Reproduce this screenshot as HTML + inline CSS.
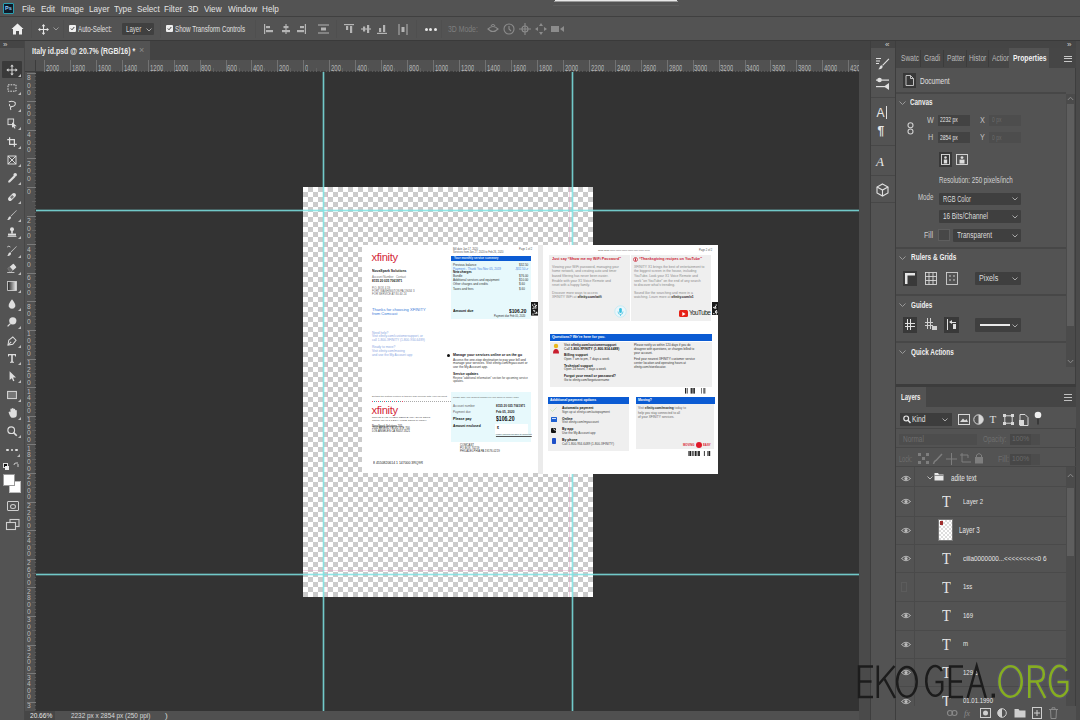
<!DOCTYPE html>
<html><head><meta charset="utf-8"><style>*{margin:0;padding:0;box-sizing:border-box}
html,body{width:1080px;height:720px;overflow:hidden;background:#535353;font-family:"Liberation Sans",sans-serif}
.a{position:absolute}
.t{position:absolute;white-space:nowrap;transform-origin:0 0}
svg.a{overflow:visible}
</style></head><body>
<div id="root" style="position:absolute;left:0;top:0;width:1080px;height:720px;overflow:hidden">
<div class="a" style="left:0px;top:0px;width:1080px;height:16px;background:#535353"></div>
<div class="a" style="left:0px;top:16px;width:1080px;height:1px;background:#404040"></div>
<div class="a" style="left:0px;top:17px;width:1080px;height:23px;background:#535353"></div>
<div class="a" style="left:0px;top:40px;width:1080px;height:1px;background:#3a3a3a"></div>
<div class="a" style="left:555px;top:0px;width:122px;height:1px;background:#e8e8e8"></div>
<div class="a" style="left:554px;top:1px;width:124px;height:1px;background:#9a9a9a"></div>
<div class="a" style="left:553px;top:5px;width:126px;height:1px;background:#5c5c5c"></div>
<div class="a" style="left:3px;top:3px;width:11px;height:11px;background:#0d1b2a;border:1px solid #2b9fb0;border-radius:1px"></div>
<div class="t" style="left:5px;top:5.75px;font-size:5.5px;line-height:5.5px;color:#8fd0ff;font-weight:bold;">Ps</div>
<div class="t" style="left:22px;top:3.85px;font-size:9.5px;line-height:9.5px;color:#e4e4e4;transform:scaleX(0.86);">File</div>
<div class="t" style="left:41px;top:3.85px;font-size:9.5px;line-height:9.5px;color:#e4e4e4;transform:scaleX(0.86);">Edit</div>
<div class="t" style="left:61px;top:3.85px;font-size:9.5px;line-height:9.5px;color:#e4e4e4;transform:scaleX(0.86);">Image</div>
<div class="t" style="left:89px;top:3.85px;font-size:9.5px;line-height:9.5px;color:#e4e4e4;transform:scaleX(0.86);">Layer</div>
<div class="t" style="left:114px;top:3.85px;font-size:9.5px;line-height:9.5px;color:#e4e4e4;transform:scaleX(0.86);">Type</div>
<div class="t" style="left:137px;top:3.85px;font-size:9.5px;line-height:9.5px;color:#e4e4e4;transform:scaleX(0.86);">Select</div>
<div class="t" style="left:164px;top:3.85px;font-size:9.5px;line-height:9.5px;color:#e4e4e4;transform:scaleX(0.86);">Filter</div>
<div class="t" style="left:188px;top:3.85px;font-size:9.5px;line-height:9.5px;color:#e4e4e4;transform:scaleX(0.86);">3D</div>
<div class="t" style="left:204px;top:3.85px;font-size:9.5px;line-height:9.5px;color:#e4e4e4;transform:scaleX(0.86);">View</div>
<div class="t" style="left:228px;top:3.85px;font-size:9.5px;line-height:9.5px;color:#e4e4e4;transform:scaleX(0.86);">Window</div>
<div class="t" style="left:262px;top:3.85px;font-size:9.5px;line-height:9.5px;color:#e4e4e4;transform:scaleX(0.86);">Help</div>
<svg class="a" style="left:11px;top:23px;" width="13" height="12" viewBox="0 0 13 12"><path d="M6.5 0.5 L12.5 6 L11 6 L11 11.5 L8 11.5 L8 8 L5 8 L5 11.5 L2 11.5 L2 6 L0.5 6 Z" fill="#eeeeee"/></svg>
<svg class="a" style="left:38px;top:23.5px;" width="11" height="11" viewBox="0 0 11 11"><g fill="none" stroke="#e6e6e6" stroke-width="1.1"><path d="M5.5 1 V10 M1 5.5 H10"/></g><g fill="#e6e6e6"><path d="M5.5 0 L7.3 2.2 H3.7Z M5.5 11 L7.3 8.8 H3.7Z M0 5.5 L2.2 3.7 V7.3Z M11 5.5 L8.8 3.7 V7.3Z"/></g></svg>
<svg class="a" style="left:53px;top:27px;" width="6" height="4" viewBox="0 0 6 4"><path d="M0.5 0.5 L3 3 L5.5 0.5" stroke="#9a9a9a" fill="none" stroke-width="1"/></svg>
<div class="a" style="left:31px;top:20px;width:1px;height:18px;background:#4f4f4f"></div>
<div class="a" style="left:63px;top:20px;width:1px;height:18px;background:#4f4f4f"></div>
<div class="a" style="left:69px;top:25px;width:7px;height:7px;background:#eeeeee;border-radius:1px"></div>
<svg class="a" style="left:70px;top:26px;" width="5" height="5" viewBox="0 0 5 5"><path d="M0.8 2.5 L2 3.8 L4.3 1" stroke="#444" fill="none" stroke-width="1"/></svg>
<div class="t" style="left:78px;top:24.50px;font-size:9px;line-height:9px;color:#e0e0e0;transform:scaleX(0.69);">Auto-Select:</div>
<div class="a" style="left:122px;top:23px;width:32px;height:12px;background:#404040;border-radius:1px"></div>
<div class="t" style="left:126px;top:24.95px;font-size:8.5px;line-height:8.5px;color:#dcdcdc;transform:scaleX(0.72);">Layer</div>
<svg class="a" style="left:146px;top:28px;" width="6" height="4" viewBox="0 0 6 4"><path d="M0.5 0.5 L3 3 L5.5 0.5" stroke="#aaa" fill="none" stroke-width="1"/></svg>
<div class="a" style="left:160px;top:20px;width:1px;height:18px;background:#4f4f4f"></div>
<div class="a" style="left:166px;top:25px;width:7px;height:7px;background:#eeeeee;border-radius:1px"></div>
<svg class="a" style="left:167px;top:26px;" width="5" height="5" viewBox="0 0 5 5"><path d="M0.8 2.5 L2 3.8 L4.3 1" stroke="#444" fill="none" stroke-width="1"/></svg>
<div class="t" style="left:175px;top:24.50px;font-size:9px;line-height:9px;color:#e0e0e0;transform:scaleX(0.69);">Show Transform Controls</div>
<div class="a" style="left:255px;top:20px;width:1px;height:18px;background:#4f4f4f"></div>
<div class="a" style="left:336px;top:20px;width:1px;height:18px;background:#4f4f4f"></div>
<div class="a" style="left:416px;top:20px;width:1px;height:18px;background:#4f4f4f"></div>
<div class="a" style="left:441px;top:20px;width:1px;height:18px;background:#4f4f4f"></div>
<svg class="a" style="left:264px;top:24px;" width="11" height="11" viewBox="0 0 11 11"><rect x="0" y="0" width="1.2" height="10" fill="#b4b4b4"/><rect x="2" y="2" width="4" height="2.2" fill="#b4b4b4"/><rect x="2" y="6" width="7" height="2.2" fill="#b4b4b4"/></svg>
<svg class="a" style="left:281px;top:24px;" width="11" height="11" viewBox="0 0 11 11"><rect x="4.4" y="0" width="1.2" height="10" fill="#b4b4b4"/><rect x="2.5" y="2" width="5" height="2.2" fill="#b4b4b4"/><rect x="1" y="6" width="8" height="2.2" fill="#b4b4b4"/></svg>
<svg class="a" style="left:296px;top:24px;" width="11" height="11" viewBox="0 0 11 11"><rect x="8.8" y="0" width="1.2" height="10" fill="#b4b4b4"/><rect x="4" y="2" width="4" height="2.2" fill="#b4b4b4"/><rect x="1" y="6" width="7" height="2.2" fill="#b4b4b4"/></svg>
<svg class="a" style="left:317.5px;top:24px;" width="11" height="11" viewBox="0 0 11 11"><rect x="0" y="0.5" width="11" height="1" fill="#b4b4b4"/><rect x="3" y="3.5" width="5" height="3" fill="#b4b4b4"/><rect x="0" y="8.5" width="11" height="1" fill="#b4b4b4"/></svg>
<svg class="a" style="left:344px;top:24px;" width="11" height="11" viewBox="0 0 11 11"><rect x="0" y="0" width="10" height="1.2" fill="#b4b4b4"/><rect x="2" y="2" width="2.2" height="4" fill="#b4b4b4"/><rect x="6" y="2" width="2.2" height="7" fill="#b4b4b4"/></svg>
<svg class="a" style="left:361px;top:24px;" width="11" height="11" viewBox="0 0 11 11"><rect x="0" y="4.4" width="10" height="1.2" fill="#b4b4b4"/><rect x="2" y="2.5" width="2.2" height="5" fill="#b4b4b4"/><rect x="6" y="1" width="2.2" height="8" fill="#b4b4b4"/></svg>
<svg class="a" style="left:377px;top:24px;" width="11" height="11" viewBox="0 0 11 11"><rect x="0" y="8.8" width="10" height="1.2" fill="#b4b4b4"/><rect x="2" y="4" width="2.2" height="4" fill="#b4b4b4"/><rect x="6" y="1" width="2.2" height="7" fill="#b4b4b4"/></svg>
<svg class="a" style="left:398px;top:24px;" width="11" height="11" viewBox="0 0 11 11"><rect x="0.5" y="0" width="1" height="11" fill="#b4b4b4"/><rect x="3.5" y="3" width="3" height="5" fill="#b4b4b4"/><rect x="8.5" y="0" width="1" height="11" fill="#b4b4b4"/></svg>
<div class="a" style="left:424.5px;top:27.6px;width:3px;height:3px;background:#e8e8e8;border-radius:50%"></div>
<div class="a" style="left:429.0px;top:27.6px;width:3px;height:3px;background:#e8e8e8;border-radius:50%"></div>
<div class="a" style="left:433.5px;top:27.6px;width:3px;height:3px;background:#e8e8e8;border-radius:50%"></div>
<div class="t" style="left:448px;top:24.75px;font-size:8.5px;line-height:8.5px;color:#7e7e7e;transform:scaleX(0.81);">3D Mode:</div>
<svg class="a" style="left:486px;top:23px;" width="14" height="12" viewBox="0 0 14 12"><g fill="none" stroke="#8c8c8c" stroke-width="1.1"><path d="M2 6 Q7 1 12 6 Q7 11 2 6Z"/><path d="M5 3 Q7 0 9 3"/></g></svg>
<svg class="a" style="left:503px;top:23px;" width="12" height="12" viewBox="0 0 12 12"><g fill="none" stroke="#8c8c8c" stroke-width="1.1"><circle cx="6" cy="6" r="5"/><path d="M6 3 V6 L8 8"/></g></svg>
<svg class="a" style="left:519px;top:23px;" width="12" height="12" viewBox="0 0 12 12"><g fill="none" stroke="#8c8c8c" stroke-width="1.1"><path d="M6 0 V12 M0 6 H12"/><circle cx="6" cy="6" r="3"/></g></svg>
<svg class="a" style="left:535px;top:23px;" width="12" height="12" viewBox="0 0 12 12"><g fill="#8c8c8c"><path d="M6 0 L8 3 H4Z M6 12 L8 9 H4Z M0 6 L3 4 V8Z M12 6 L9 4 V8Z"/></g></svg>
<svg class="a" style="left:551px;top:24px;" width="14" height="10" viewBox="0 0 14 10"><g fill="#8c8c8c"><rect x="0" y="2" width="8" height="6"/><path d="M9 5 L13 2 V8Z"/></g></svg>
<div class="a" style="left:0px;top:41px;width:25px;height:679px;background:#535353"></div>
<div class="a" style="left:24px;top:41px;width:1px;height:679px;background:#474747"></div>
<div class="a" style="left:0px;top:41px;width:24px;height:7px;background:#454545"></div>
<div class="t" style="left:3px;top:40.50px;font-size:8px;line-height:8px;color:#cfcfcf;">&#187;</div>
<div class="a" style="left:2px;top:61px;width:20px;height:17px;background:#3a3a3a;border-radius:1px"></div>
<svg class="a" style="left:5.0px;top:63.0px;transform:scale(0.8);transform-origin:50% 50%" width="14" height="14" viewBox="0 0 14 14"><g fill="#dedede"><rect x="6.4" y="2" width="1.2" height="10"/><rect x="2" y="6.4" width="10" height="1.2"/><path d="M7 0 L9.2 2.6 H4.8Z M7 14 L9.2 11.4 H4.8Z M0 7 L2.6 4.8 V9.2Z M14 7 L11.4 4.8 V9.2Z"/></g></svg>
<svg class="a" style="left:18px;top:74px;" width="3" height="3" viewBox="0 0 3 3"><path d="M3 0 V3 H0Z" fill="#bdbdbd"/></svg>
<svg class="a" style="left:5.0px;top:81.0px;transform:scale(0.8);transform-origin:50% 50%" width="14" height="14" viewBox="0 0 14 14"><rect x="2" y="3" width="10" height="8" fill="none" stroke="#dedede" stroke-width="1.2" stroke-dasharray="2 1.3"/></svg>
<svg class="a" style="left:18px;top:92px;" width="3" height="3" viewBox="0 0 3 3"><path d="M3 0 V3 H0Z" fill="#bdbdbd"/></svg>
<svg class="a" style="left:5.0px;top:98.0px;transform:scale(0.8);transform-origin:50% 50%" width="14" height="14" viewBox="0 0 14 14"><g fill="none" stroke="#dedede" stroke-width="1.3"><path d="M3 3 Q8 1 11 4 Q12 8 7 9 Q3 9 4 6 M6 9 Q4 12 6 13"/></g></svg>
<svg class="a" style="left:18px;top:109px;" width="3" height="3" viewBox="0 0 3 3"><path d="M3 0 V3 H0Z" fill="#bdbdbd"/></svg>
<svg class="a" style="left:5.0px;top:116.0px;transform:scale(0.8);transform-origin:50% 50%" width="14" height="14" viewBox="0 0 14 14"><g fill="#dedede"><rect x="2" y="2" width="7" height="7" fill="none" stroke="#dedede" stroke-width="1.2"/><path d="M7 6 L13 11 L10 11 L11.5 13.5 L10 14 L8.5 11.8 L7 13Z"/></g></svg>
<svg class="a" style="left:18px;top:127px;" width="3" height="3" viewBox="0 0 3 3"><path d="M3 0 V3 H0Z" fill="#bdbdbd"/></svg>
<svg class="a" style="left:5.0px;top:134.5px;transform:scale(0.8);transform-origin:50% 50%" width="14" height="14" viewBox="0 0 14 14"><g fill="none" stroke="#dedede" stroke-width="1.5"><path d="M4 1 V10 H13 M1 4 H10 V13"/></g></svg>
<svg class="a" style="left:18px;top:145.5px;" width="3" height="3" viewBox="0 0 3 3"><path d="M3 0 V3 H0Z" fill="#bdbdbd"/></svg>
<svg class="a" style="left:5.0px;top:153.0px;transform:scale(0.8);transform-origin:50% 50%" width="14" height="14" viewBox="0 0 14 14"><g fill="none" stroke="#dedede" stroke-width="1.2"><rect x="2" y="2" width="10" height="10"/><path d="M2 2 L12 12 M12 2 L2 12"/></g></svg>
<svg class="a" style="left:18px;top:164px;" width="3" height="3" viewBox="0 0 3 3"><path d="M3 0 V3 H0Z" fill="#bdbdbd"/></svg>
<svg class="a" style="left:5.0px;top:171.0px;transform:scale(0.8);transform-origin:50% 50%" width="14" height="14" viewBox="0 0 14 14"><g fill="none" stroke="#dedede" stroke-width="1.4"><path d="M10 4 L3 11 L3 12 L4 12 L11 5"/></g><circle cx="11" cy="3" r="2.2" fill="#dedede"/></svg>
<svg class="a" style="left:18px;top:182px;" width="3" height="3" viewBox="0 0 3 3"><path d="M3 0 V3 H0Z" fill="#bdbdbd"/></svg>
<svg class="a" style="left:5.0px;top:189.5px;transform:scale(0.8);transform-origin:50% 50%" width="14" height="14" viewBox="0 0 14 14"><g transform="rotate(-45 7 7)"><rect x="1" y="4.5" width="12" height="5" rx="2.5" fill="#dedede"/><rect x="5" y="5.5" width="4" height="3" fill="#777"/></g></svg>
<svg class="a" style="left:18px;top:200.5px;" width="3" height="3" viewBox="0 0 3 3"><path d="M3 0 V3 H0Z" fill="#bdbdbd"/></svg>
<svg class="a" style="left:5.0px;top:207.5px;transform:scale(0.8);transform-origin:50% 50%" width="14" height="14" viewBox="0 0 14 14"><g fill="#dedede"><path d="M12.5 1 L13 1.5 L6 8.5 L5.5 8Z"/><path d="M5 8.5 Q6.5 10 5 12 Q3 13.5 1 13 Q2.5 12 2.5 10.5 Q3 8.5 5 8.5Z"/></g></svg>
<svg class="a" style="left:18px;top:218.5px;" width="3" height="3" viewBox="0 0 3 3"><path d="M3 0 V3 H0Z" fill="#bdbdbd"/></svg>
<svg class="a" style="left:5.0px;top:225.0px;transform:scale(0.8);transform-origin:50% 50%" width="14" height="14" viewBox="0 0 14 14"><g fill="#dedede"><circle cx="7" cy="3.5" r="2.5"/><rect x="6" y="5" width="2" height="4"/><rect x="2" y="9" width="10" height="2.5"/><rect x="1.5" y="12" width="11" height="1"/></g></svg>
<svg class="a" style="left:18px;top:236px;" width="3" height="3" viewBox="0 0 3 3"><path d="M3 0 V3 H0Z" fill="#bdbdbd"/></svg>
<svg class="a" style="left:5.0px;top:243.5px;transform:scale(0.8);transform-origin:50% 50%" width="14" height="14" viewBox="0 0 14 14"><g fill="#dedede"><path d="M12.5 1 L13 1.5 L6 8.5 L5.5 8Z"/><path d="M5 8.5 Q6.5 10 5 12 Q3 13.5 1 13 Q2.5 12 2.5 10.5 Q3 8.5 5 8.5Z"/></g><path d="M1 2 Q3 0 5 2" stroke="#dedede" fill="none"/></svg>
<svg class="a" style="left:18px;top:254.5px;" width="3" height="3" viewBox="0 0 3 3"><path d="M3 0 V3 H0Z" fill="#bdbdbd"/></svg>
<svg class="a" style="left:5.0px;top:261.0px;transform:scale(0.8);transform-origin:50% 50%" width="14" height="14" viewBox="0 0 14 14"><g transform="rotate(-40 7 7)"><rect x="2" y="4" width="10" height="6" rx="1" fill="#dedede"/><rect x="2" y="4" width="4" height="6" fill="#666"/></g><rect x="1" y="12" width="9" height="1" fill="#dedede"/></svg>
<svg class="a" style="left:18px;top:272px;" width="3" height="3" viewBox="0 0 3 3"><path d="M3 0 V3 H0Z" fill="#bdbdbd"/></svg>
<svg class="a" style="left:5.0px;top:279.0px;transform:scale(0.8);transform-origin:50% 50%" width="14" height="14" viewBox="0 0 14 14"><defs><linearGradient id="gr" x1="0" x2="1"><stop offset="0" stop-color="#222"/><stop offset="1" stop-color="#eee"/></linearGradient></defs><rect x="1.5" y="1.5" width="11" height="11" fill="url(#gr)" stroke="#ddd" stroke-width="1"/></svg>
<svg class="a" style="left:18px;top:290px;" width="3" height="3" viewBox="0 0 3 3"><path d="M3 0 V3 H0Z" fill="#bdbdbd"/></svg>
<svg class="a" style="left:5.0px;top:297.0px;transform:scale(0.8);transform-origin:50% 50%" width="14" height="14" viewBox="0 0 14 14"><path d="M7 1 Q12 7 11 10 Q10 13 7 13 Q4 13 3 10 Q2 7 7 1Z" fill="#dedede"/></svg>
<svg class="a" style="left:18px;top:308px;" width="3" height="3" viewBox="0 0 3 3"><path d="M3 0 V3 H0Z" fill="#bdbdbd"/></svg>
<svg class="a" style="left:5.0px;top:315.0px;transform:scale(0.8);transform-origin:50% 50%" width="14" height="14" viewBox="0 0 14 14"><circle cx="8" cy="5.5" r="4.5" fill="#dedede"/><path d="M5 9 L1.5 12.5" stroke="#dedede" stroke-width="1.6"/></svg>
<svg class="a" style="left:18px;top:326px;" width="3" height="3" viewBox="0 0 3 3"><path d="M3 0 V3 H0Z" fill="#bdbdbd"/></svg>
<svg class="a" style="left:5.0px;top:333.5px;transform:scale(0.8);transform-origin:50% 50%" width="14" height="14" viewBox="0 0 14 14"><g fill="none" stroke="#dedede" stroke-width="1.3"><path d="M2 12 L3 6 L8 2 L12 6 L8 11Z"/><path d="M2 12 L6 8"/></g></svg>
<svg class="a" style="left:18px;top:344.5px;" width="3" height="3" viewBox="0 0 3 3"><path d="M3 0 V3 H0Z" fill="#bdbdbd"/></svg>
<svg class="a" style="left:5.0px;top:351.0px;transform:scale(0.8);transform-origin:50% 50%" width="14" height="14" viewBox="0 0 14 14"><path d="M2 2 H12 V5 H11 L10.5 3.5 H8 V11.5 L9.5 12 V13 H4.5 V12 L6 11.5 V3.5 H3.5 L3 5 H2Z" fill="#dedede"/></svg>
<svg class="a" style="left:18px;top:362px;" width="3" height="3" viewBox="0 0 3 3"><path d="M3 0 V3 H0Z" fill="#bdbdbd"/></svg>
<svg class="a" style="left:5.0px;top:369.0px;transform:scale(0.8);transform-origin:50% 50%" width="14" height="14" viewBox="0 0 14 14"><path d="M4 1 L12 9 L8.3 9 L10 13 L8.5 13.6 L6.8 9.7 L4 12Z" fill="#dedede"/></svg>
<svg class="a" style="left:18px;top:380px;" width="3" height="3" viewBox="0 0 3 3"><path d="M3 0 V3 H0Z" fill="#bdbdbd"/></svg>
<svg class="a" style="left:5.0px;top:387.5px;transform:scale(0.8);transform-origin:50% 50%" width="14" height="14" viewBox="0 0 14 14"><rect x="1.5" y="2.5" width="11" height="9" fill="#777" stroke="#dedede" stroke-width="1.2"/></svg>
<svg class="a" style="left:18px;top:398.5px;" width="3" height="3" viewBox="0 0 3 3"><path d="M3 0 V3 H0Z" fill="#bdbdbd"/></svg>
<svg class="a" style="left:5.0px;top:406.0px;transform:scale(0.8);transform-origin:50% 50%" width="14" height="14" viewBox="0 0 14 14"><path d="M3 7 Q2 5 4 5 L5 6 V2.5 Q5 1.5 6 1.5 Q7 1.5 7 2.5 V1.8 Q7 0.8 8 0.8 Q9 0.8 9 1.8 V2.5 Q9 1.6 10 1.6 Q11 1.6 11 2.6 V4 Q11 3.2 12 3.2 Q13 3.2 13 4.2 V9 Q13 13 9 13 H7 Q5 13 3 7Z" fill="#dedede"/></svg>
<svg class="a" style="left:18px;top:417px;" width="3" height="3" viewBox="0 0 3 3"><path d="M3 0 V3 H0Z" fill="#bdbdbd"/></svg>
<svg class="a" style="left:5.0px;top:424.0px;transform:scale(0.8);transform-origin:50% 50%" width="14" height="14" viewBox="0 0 14 14"><g fill="none" stroke="#dedede" stroke-width="1.4"><circle cx="6" cy="6" r="4.2"/><path d="M9 9 L13 13" stroke-width="2"/></g></svg>
<svg class="a" style="left:18px;top:435px;" width="3" height="3" viewBox="0 0 3 3"><path d="M3 0 V3 H0Z" fill="#bdbdbd"/></svg>
<div class="a" style="left:6.3px;top:448.8px;width:2.4px;height:2.4px;background:#e0e0e0;border-radius:50%"></div>
<div class="a" style="left:10.8px;top:448.8px;width:2.4px;height:2.4px;background:#e0e0e0;border-radius:50%"></div>
<div class="a" style="left:15.3px;top:448.8px;width:2.4px;height:2.4px;background:#e0e0e0;border-radius:50%"></div>
<svg class="a" style="left:17px;top:454px;" width="3" height="3" viewBox="0 0 3 3"><path d="M3 0 V3 H0Z" fill="#bdbdbd"/></svg>
<div class="a" style="left:3px;top:463px;width:5px;height:5px;background:#111;border:1px solid #ddd"></div>
<div class="a" style="left:5px;top:466px;width:4px;height:4px;background:#eee"></div>
<svg class="a" style="left:13px;top:462px;" width="7" height="7" viewBox="0 0 7 7"><path d="M1 3 Q1 1 3 1 L5 1" stroke="#ccc" fill="none"/><path d="M5 2 V5" stroke="#ccc"/></svg>
<div class="a" style="left:9px;top:481px;width:12px;height:12px;background:#ffffff;border:1px solid #bbb"></div>
<div class="a" style="left:3px;top:474px;width:12px;height:12px;background:#ffffff;border:1px solid #999"></div>
<div class="a" style="left:7px;top:501px;width:12px;height:10px;border:1.2px solid #cfcfcf;border-radius:1px"></div>
<div class="a" style="left:10px;top:503.5px;width:6px;height:5px;border:1px solid #cfcfcf;border-radius:50%"></div>
<svg class="a" style="left:6px;top:519px;" width="14" height="12" viewBox="0 0 14 12"><g fill="none" stroke="#cfcfcf" stroke-width="1.1"><rect x="4" y="0.5" width="9" height="7"/><rect x="0.5" y="3.5" width="9" height="7" fill="#535353"/></g></svg>
<div class="a" style="left:25px;top:41px;width:845px;height:19px;background:#434343"></div>
<div class="a" style="left:25px;top:41px;width:125px;height:19px;background:#535353"></div>
<div class="t" style="left:32px;top:45.75px;font-size:9.5px;line-height:9.5px;color:#ececec;transform:scaleX(0.733);font-weight:bold;">Italy id.psd @ 20.7% (RGB/16) *</div>
<div class="t" style="left:139px;top:46.00px;font-size:9px;line-height:9px;color:#8c8c8c;">&#215;</div>
<div class="a" style="left:25px;top:60px;width:834px;height:12px;background:#515151"></div>
<div class="a" style="left:25px;top:72px;width:11px;height:639px;background:#515151"></div>
<div class="a" style="left:25px;top:71px;width:834px;height:1px;background:#3c3c3c"></div>
<div class="a" style="left:35px;top:60px;width:1px;height:651px;background:#3c3c3c"></div>
<div class="a" style="left:44px;top:60px;width:1px;height:12px;background:#727272"></div>
<div class="a" style="left:47px;top:70px;width:1px;height:2px;background:#575757"></div>
<div class="a" style="left:50px;top:70px;width:1px;height:2px;background:#575757"></div>
<div class="a" style="left:54px;top:70px;width:1px;height:2px;background:#575757"></div>
<div class="a" style="left:57px;top:68px;width:1px;height:4px;background:#606060"></div>
<div class="a" style="left:60px;top:70px;width:1px;height:2px;background:#575757"></div>
<div class="a" style="left:63px;top:70px;width:1px;height:2px;background:#575757"></div>
<div class="a" style="left:67px;top:70px;width:1px;height:2px;background:#575757"></div>
<div class="t" style="left:45.7px;top:63.6px;font-size:9.5px;line-height:9.5px;color:#b4b4b4;transform:scale(0.63,0.86);overflow:hidden;">2000</div>
<div class="a" style="left:70px;top:60px;width:1px;height:12px;background:#727272"></div>
<div class="a" style="left:73px;top:70px;width:1px;height:2px;background:#575757"></div>
<div class="a" style="left:76px;top:70px;width:1px;height:2px;background:#575757"></div>
<div class="a" style="left:80px;top:70px;width:1px;height:2px;background:#575757"></div>
<div class="a" style="left:83px;top:68px;width:1px;height:4px;background:#606060"></div>
<div class="a" style="left:86px;top:70px;width:1px;height:2px;background:#575757"></div>
<div class="a" style="left:89px;top:70px;width:1px;height:2px;background:#575757"></div>
<div class="a" style="left:93px;top:70px;width:1px;height:2px;background:#575757"></div>
<div class="t" style="left:71.6px;top:63.6px;font-size:9.5px;line-height:9.5px;color:#b4b4b4;transform:scale(0.63,0.86);overflow:hidden;">1800</div>
<div class="a" style="left:96px;top:60px;width:1px;height:12px;background:#727272"></div>
<div class="a" style="left:99px;top:70px;width:1px;height:2px;background:#575757"></div>
<div class="a" style="left:102px;top:70px;width:1px;height:2px;background:#575757"></div>
<div class="a" style="left:106px;top:70px;width:1px;height:2px;background:#575757"></div>
<div class="a" style="left:109px;top:68px;width:1px;height:4px;background:#606060"></div>
<div class="a" style="left:112px;top:70px;width:1px;height:2px;background:#575757"></div>
<div class="a" style="left:115px;top:70px;width:1px;height:2px;background:#575757"></div>
<div class="a" style="left:119px;top:70px;width:1px;height:2px;background:#575757"></div>
<div class="t" style="left:97.6px;top:63.6px;font-size:9.5px;line-height:9.5px;color:#b4b4b4;transform:scale(0.63,0.86);overflow:hidden;">1600</div>
<div class="a" style="left:122px;top:60px;width:1px;height:12px;background:#727272"></div>
<div class="a" style="left:125px;top:70px;width:1px;height:2px;background:#575757"></div>
<div class="a" style="left:128px;top:70px;width:1px;height:2px;background:#575757"></div>
<div class="a" style="left:131px;top:70px;width:1px;height:2px;background:#575757"></div>
<div class="a" style="left:135px;top:68px;width:1px;height:4px;background:#606060"></div>
<div class="a" style="left:138px;top:70px;width:1px;height:2px;background:#575757"></div>
<div class="a" style="left:141px;top:70px;width:1px;height:2px;background:#575757"></div>
<div class="a" style="left:144px;top:70px;width:1px;height:2px;background:#575757"></div>
<div class="t" style="left:123.5px;top:63.6px;font-size:9.5px;line-height:9.5px;color:#b4b4b4;transform:scale(0.63,0.86);overflow:hidden;">1400</div>
<div class="a" style="left:148px;top:60px;width:1px;height:12px;background:#727272"></div>
<div class="a" style="left:151px;top:70px;width:1px;height:2px;background:#575757"></div>
<div class="a" style="left:154px;top:70px;width:1px;height:2px;background:#575757"></div>
<div class="a" style="left:157px;top:70px;width:1px;height:2px;background:#575757"></div>
<div class="a" style="left:161px;top:68px;width:1px;height:4px;background:#606060"></div>
<div class="a" style="left:164px;top:70px;width:1px;height:2px;background:#575757"></div>
<div class="a" style="left:167px;top:70px;width:1px;height:2px;background:#575757"></div>
<div class="a" style="left:170px;top:70px;width:1px;height:2px;background:#575757"></div>
<div class="t" style="left:149.5px;top:63.6px;font-size:9.5px;line-height:9.5px;color:#b4b4b4;transform:scale(0.63,0.86);overflow:hidden;">1200</div>
<div class="a" style="left:174px;top:60px;width:1px;height:12px;background:#727272"></div>
<div class="a" style="left:177px;top:70px;width:1px;height:2px;background:#575757"></div>
<div class="a" style="left:180px;top:70px;width:1px;height:2px;background:#575757"></div>
<div class="a" style="left:183px;top:70px;width:1px;height:2px;background:#575757"></div>
<div class="a" style="left:187px;top:68px;width:1px;height:4px;background:#606060"></div>
<div class="a" style="left:190px;top:70px;width:1px;height:2px;background:#575757"></div>
<div class="a" style="left:193px;top:70px;width:1px;height:2px;background:#575757"></div>
<div class="a" style="left:196px;top:70px;width:1px;height:2px;background:#575757"></div>
<div class="t" style="left:175.4px;top:63.6px;font-size:9.5px;line-height:9.5px;color:#b4b4b4;transform:scale(0.63,0.86);overflow:hidden;">1000</div>
<div class="a" style="left:200px;top:60px;width:1px;height:12px;background:#727272"></div>
<div class="a" style="left:203px;top:70px;width:1px;height:2px;background:#575757"></div>
<div class="a" style="left:206px;top:70px;width:1px;height:2px;background:#575757"></div>
<div class="a" style="left:209px;top:70px;width:1px;height:2px;background:#575757"></div>
<div class="a" style="left:213px;top:68px;width:1px;height:4px;background:#606060"></div>
<div class="a" style="left:216px;top:70px;width:1px;height:2px;background:#575757"></div>
<div class="a" style="left:219px;top:70px;width:1px;height:2px;background:#575757"></div>
<div class="a" style="left:222px;top:70px;width:1px;height:2px;background:#575757"></div>
<div class="t" style="left:201.4px;top:63.6px;font-size:9.5px;line-height:9.5px;color:#b4b4b4;transform:scale(0.63,0.86);overflow:hidden;">800</div>
<div class="a" style="left:226px;top:60px;width:1px;height:12px;background:#727272"></div>
<div class="a" style="left:229px;top:70px;width:1px;height:2px;background:#575757"></div>
<div class="a" style="left:232px;top:70px;width:1px;height:2px;background:#575757"></div>
<div class="a" style="left:235px;top:70px;width:1px;height:2px;background:#575757"></div>
<div class="a" style="left:239px;top:68px;width:1px;height:4px;background:#606060"></div>
<div class="a" style="left:242px;top:70px;width:1px;height:2px;background:#575757"></div>
<div class="a" style="left:245px;top:70px;width:1px;height:2px;background:#575757"></div>
<div class="a" style="left:248px;top:70px;width:1px;height:2px;background:#575757"></div>
<div class="t" style="left:227.3px;top:63.6px;font-size:9.5px;line-height:9.5px;color:#b4b4b4;transform:scale(0.63,0.86);overflow:hidden;">600</div>
<div class="a" style="left:251px;top:60px;width:1px;height:12px;background:#727272"></div>
<div class="a" style="left:255px;top:70px;width:1px;height:2px;background:#575757"></div>
<div class="a" style="left:258px;top:70px;width:1px;height:2px;background:#575757"></div>
<div class="a" style="left:261px;top:70px;width:1px;height:2px;background:#575757"></div>
<div class="a" style="left:264px;top:68px;width:1px;height:4px;background:#606060"></div>
<div class="a" style="left:268px;top:70px;width:1px;height:2px;background:#575757"></div>
<div class="a" style="left:271px;top:70px;width:1px;height:2px;background:#575757"></div>
<div class="a" style="left:274px;top:70px;width:1px;height:2px;background:#575757"></div>
<div class="t" style="left:253.3px;top:63.6px;font-size:9.5px;line-height:9.5px;color:#b4b4b4;transform:scale(0.63,0.86);overflow:hidden;">400</div>
<div class="a" style="left:277px;top:60px;width:1px;height:12px;background:#727272"></div>
<div class="a" style="left:281px;top:70px;width:1px;height:2px;background:#575757"></div>
<div class="a" style="left:284px;top:70px;width:1px;height:2px;background:#575757"></div>
<div class="a" style="left:287px;top:70px;width:1px;height:2px;background:#575757"></div>
<div class="a" style="left:290px;top:68px;width:1px;height:4px;background:#606060"></div>
<div class="a" style="left:294px;top:70px;width:1px;height:2px;background:#575757"></div>
<div class="a" style="left:297px;top:70px;width:1px;height:2px;background:#575757"></div>
<div class="a" style="left:300px;top:70px;width:1px;height:2px;background:#575757"></div>
<div class="t" style="left:279.2px;top:63.6px;font-size:9.5px;line-height:9.5px;color:#b4b4b4;transform:scale(0.63,0.86);overflow:hidden;">200</div>
<div class="a" style="left:303px;top:60px;width:1px;height:12px;background:#727272"></div>
<div class="a" style="left:307px;top:70px;width:1px;height:2px;background:#575757"></div>
<div class="a" style="left:310px;top:70px;width:1px;height:2px;background:#575757"></div>
<div class="a" style="left:313px;top:70px;width:1px;height:2px;background:#575757"></div>
<div class="a" style="left:316px;top:68px;width:1px;height:4px;background:#606060"></div>
<div class="a" style="left:320px;top:70px;width:1px;height:2px;background:#575757"></div>
<div class="a" style="left:323px;top:70px;width:1px;height:2px;background:#575757"></div>
<div class="a" style="left:326px;top:70px;width:1px;height:2px;background:#575757"></div>
<div class="t" style="left:305.2px;top:63.6px;font-size:9.5px;line-height:9.5px;color:#b4b4b4;transform:scale(0.63,0.86);overflow:hidden;">0</div>
<div class="a" style="left:329px;top:60px;width:1px;height:12px;background:#727272"></div>
<div class="a" style="left:333px;top:70px;width:1px;height:2px;background:#575757"></div>
<div class="a" style="left:336px;top:70px;width:1px;height:2px;background:#575757"></div>
<div class="a" style="left:339px;top:70px;width:1px;height:2px;background:#575757"></div>
<div class="a" style="left:342px;top:68px;width:1px;height:4px;background:#606060"></div>
<div class="a" style="left:346px;top:70px;width:1px;height:2px;background:#575757"></div>
<div class="a" style="left:349px;top:70px;width:1px;height:2px;background:#575757"></div>
<div class="a" style="left:352px;top:70px;width:1px;height:2px;background:#575757"></div>
<div class="t" style="left:331.1px;top:63.6px;font-size:9.5px;line-height:9.5px;color:#b4b4b4;transform:scale(0.63,0.86);overflow:hidden;">200</div>
<div class="a" style="left:355px;top:60px;width:1px;height:12px;background:#727272"></div>
<div class="a" style="left:359px;top:70px;width:1px;height:2px;background:#575757"></div>
<div class="a" style="left:362px;top:70px;width:1px;height:2px;background:#575757"></div>
<div class="a" style="left:365px;top:70px;width:1px;height:2px;background:#575757"></div>
<div class="a" style="left:368px;top:68px;width:1px;height:4px;background:#606060"></div>
<div class="a" style="left:372px;top:70px;width:1px;height:2px;background:#575757"></div>
<div class="a" style="left:375px;top:70px;width:1px;height:2px;background:#575757"></div>
<div class="a" style="left:378px;top:70px;width:1px;height:2px;background:#575757"></div>
<div class="t" style="left:357.1px;top:63.6px;font-size:9.5px;line-height:9.5px;color:#b4b4b4;transform:scale(0.63,0.86);overflow:hidden;">400</div>
<div class="a" style="left:381px;top:60px;width:1px;height:12px;background:#727272"></div>
<div class="a" style="left:384px;top:70px;width:1px;height:2px;background:#575757"></div>
<div class="a" style="left:388px;top:70px;width:1px;height:2px;background:#575757"></div>
<div class="a" style="left:391px;top:70px;width:1px;height:2px;background:#575757"></div>
<div class="a" style="left:394px;top:68px;width:1px;height:4px;background:#606060"></div>
<div class="a" style="left:397px;top:70px;width:1px;height:2px;background:#575757"></div>
<div class="a" style="left:401px;top:70px;width:1px;height:2px;background:#575757"></div>
<div class="a" style="left:404px;top:70px;width:1px;height:2px;background:#575757"></div>
<div class="t" style="left:383.1px;top:63.6px;font-size:9.5px;line-height:9.5px;color:#b4b4b4;transform:scale(0.63,0.86);overflow:hidden;">600</div>
<div class="a" style="left:407px;top:60px;width:1px;height:12px;background:#727272"></div>
<div class="a" style="left:410px;top:70px;width:1px;height:2px;background:#575757"></div>
<div class="a" style="left:414px;top:70px;width:1px;height:2px;background:#575757"></div>
<div class="a" style="left:417px;top:70px;width:1px;height:2px;background:#575757"></div>
<div class="a" style="left:420px;top:68px;width:1px;height:4px;background:#606060"></div>
<div class="a" style="left:423px;top:70px;width:1px;height:2px;background:#575757"></div>
<div class="a" style="left:427px;top:70px;width:1px;height:2px;background:#575757"></div>
<div class="a" style="left:430px;top:70px;width:1px;height:2px;background:#575757"></div>
<div class="t" style="left:409.0px;top:63.6px;font-size:9.5px;line-height:9.5px;color:#b4b4b4;transform:scale(0.63,0.86);overflow:hidden;">800</div>
<div class="a" style="left:433px;top:60px;width:1px;height:12px;background:#727272"></div>
<div class="a" style="left:436px;top:70px;width:1px;height:2px;background:#575757"></div>
<div class="a" style="left:440px;top:70px;width:1px;height:2px;background:#575757"></div>
<div class="a" style="left:443px;top:70px;width:1px;height:2px;background:#575757"></div>
<div class="a" style="left:446px;top:68px;width:1px;height:4px;background:#606060"></div>
<div class="a" style="left:449px;top:70px;width:1px;height:2px;background:#575757"></div>
<div class="a" style="left:453px;top:70px;width:1px;height:2px;background:#575757"></div>
<div class="a" style="left:456px;top:70px;width:1px;height:2px;background:#575757"></div>
<div class="t" style="left:434.9px;top:63.6px;font-size:9.5px;line-height:9.5px;color:#b4b4b4;transform:scale(0.63,0.86);overflow:hidden;">1000</div>
<div class="a" style="left:459px;top:60px;width:1px;height:12px;background:#727272"></div>
<div class="a" style="left:462px;top:70px;width:1px;height:2px;background:#575757"></div>
<div class="a" style="left:466px;top:70px;width:1px;height:2px;background:#575757"></div>
<div class="a" style="left:469px;top:70px;width:1px;height:2px;background:#575757"></div>
<div class="a" style="left:472px;top:68px;width:1px;height:4px;background:#606060"></div>
<div class="a" style="left:475px;top:70px;width:1px;height:2px;background:#575757"></div>
<div class="a" style="left:479px;top:70px;width:1px;height:2px;background:#575757"></div>
<div class="a" style="left:482px;top:70px;width:1px;height:2px;background:#575757"></div>
<div class="t" style="left:460.9px;top:63.6px;font-size:9.5px;line-height:9.5px;color:#b4b4b4;transform:scale(0.63,0.86);overflow:hidden;">1200</div>
<div class="a" style="left:485px;top:60px;width:1px;height:12px;background:#727272"></div>
<div class="a" style="left:488px;top:70px;width:1px;height:2px;background:#575757"></div>
<div class="a" style="left:492px;top:70px;width:1px;height:2px;background:#575757"></div>
<div class="a" style="left:495px;top:70px;width:1px;height:2px;background:#575757"></div>
<div class="a" style="left:498px;top:68px;width:1px;height:4px;background:#606060"></div>
<div class="a" style="left:501px;top:70px;width:1px;height:2px;background:#575757"></div>
<div class="a" style="left:505px;top:70px;width:1px;height:2px;background:#575757"></div>
<div class="a" style="left:508px;top:70px;width:1px;height:2px;background:#575757"></div>
<div class="t" style="left:486.8px;top:63.6px;font-size:9.5px;line-height:9.5px;color:#b4b4b4;transform:scale(0.63,0.86);overflow:hidden;">1400</div>
<div class="a" style="left:511px;top:60px;width:1px;height:12px;background:#727272"></div>
<div class="a" style="left:514px;top:70px;width:1px;height:2px;background:#575757"></div>
<div class="a" style="left:517px;top:70px;width:1px;height:2px;background:#575757"></div>
<div class="a" style="left:521px;top:70px;width:1px;height:2px;background:#575757"></div>
<div class="a" style="left:524px;top:68px;width:1px;height:4px;background:#606060"></div>
<div class="a" style="left:527px;top:70px;width:1px;height:2px;background:#575757"></div>
<div class="a" style="left:530px;top:70px;width:1px;height:2px;background:#575757"></div>
<div class="a" style="left:534px;top:70px;width:1px;height:2px;background:#575757"></div>
<div class="t" style="left:512.8px;top:63.6px;font-size:9.5px;line-height:9.5px;color:#b4b4b4;transform:scale(0.63,0.86);overflow:hidden;">1600</div>
<div class="a" style="left:537px;top:60px;width:1px;height:12px;background:#727272"></div>
<div class="a" style="left:540px;top:70px;width:1px;height:2px;background:#575757"></div>
<div class="a" style="left:543px;top:70px;width:1px;height:2px;background:#575757"></div>
<div class="a" style="left:547px;top:70px;width:1px;height:2px;background:#575757"></div>
<div class="a" style="left:550px;top:68px;width:1px;height:4px;background:#606060"></div>
<div class="a" style="left:553px;top:70px;width:1px;height:2px;background:#575757"></div>
<div class="a" style="left:556px;top:70px;width:1px;height:2px;background:#575757"></div>
<div class="a" style="left:560px;top:70px;width:1px;height:2px;background:#575757"></div>
<div class="t" style="left:538.7px;top:63.6px;font-size:9.5px;line-height:9.5px;color:#b4b4b4;transform:scale(0.63,0.86);overflow:hidden;">1800</div>
<div class="a" style="left:563px;top:60px;width:1px;height:12px;background:#727272"></div>
<div class="a" style="left:566px;top:70px;width:1px;height:2px;background:#575757"></div>
<div class="a" style="left:569px;top:70px;width:1px;height:2px;background:#575757"></div>
<div class="a" style="left:573px;top:70px;width:1px;height:2px;background:#575757"></div>
<div class="a" style="left:576px;top:68px;width:1px;height:4px;background:#606060"></div>
<div class="a" style="left:579px;top:70px;width:1px;height:2px;background:#575757"></div>
<div class="a" style="left:582px;top:70px;width:1px;height:2px;background:#575757"></div>
<div class="a" style="left:586px;top:70px;width:1px;height:2px;background:#575757"></div>
<div class="t" style="left:564.7px;top:63.6px;font-size:9.5px;line-height:9.5px;color:#b4b4b4;transform:scale(0.63,0.86);overflow:hidden;">2000</div>
<div class="a" style="left:589px;top:60px;width:1px;height:12px;background:#727272"></div>
<div class="a" style="left:592px;top:70px;width:1px;height:2px;background:#575757"></div>
<div class="a" style="left:595px;top:70px;width:1px;height:2px;background:#575757"></div>
<div class="a" style="left:599px;top:70px;width:1px;height:2px;background:#575757"></div>
<div class="a" style="left:602px;top:68px;width:1px;height:4px;background:#606060"></div>
<div class="a" style="left:605px;top:70px;width:1px;height:2px;background:#575757"></div>
<div class="a" style="left:608px;top:70px;width:1px;height:2px;background:#575757"></div>
<div class="a" style="left:612px;top:70px;width:1px;height:2px;background:#575757"></div>
<div class="t" style="left:590.6px;top:63.6px;font-size:9.5px;line-height:9.5px;color:#b4b4b4;transform:scale(0.63,0.86);overflow:hidden;">2200</div>
<div class="a" style="left:615px;top:60px;width:1px;height:12px;background:#727272"></div>
<div class="a" style="left:618px;top:70px;width:1px;height:2px;background:#575757"></div>
<div class="a" style="left:621px;top:70px;width:1px;height:2px;background:#575757"></div>
<div class="a" style="left:625px;top:70px;width:1px;height:2px;background:#575757"></div>
<div class="a" style="left:628px;top:68px;width:1px;height:4px;background:#606060"></div>
<div class="a" style="left:631px;top:70px;width:1px;height:2px;background:#575757"></div>
<div class="a" style="left:634px;top:70px;width:1px;height:2px;background:#575757"></div>
<div class="a" style="left:638px;top:70px;width:1px;height:2px;background:#575757"></div>
<div class="t" style="left:616.6px;top:63.6px;font-size:9.5px;line-height:9.5px;color:#b4b4b4;transform:scale(0.63,0.86);overflow:hidden;">2400</div>
<div class="a" style="left:641px;top:60px;width:1px;height:12px;background:#727272"></div>
<div class="a" style="left:644px;top:70px;width:1px;height:2px;background:#575757"></div>
<div class="a" style="left:647px;top:70px;width:1px;height:2px;background:#575757"></div>
<div class="a" style="left:650px;top:70px;width:1px;height:2px;background:#575757"></div>
<div class="a" style="left:654px;top:68px;width:1px;height:4px;background:#606060"></div>
<div class="a" style="left:657px;top:70px;width:1px;height:2px;background:#575757"></div>
<div class="a" style="left:660px;top:70px;width:1px;height:2px;background:#575757"></div>
<div class="a" style="left:663px;top:70px;width:1px;height:2px;background:#575757"></div>
<div class="t" style="left:642.5px;top:63.6px;font-size:9.5px;line-height:9.5px;color:#b4b4b4;transform:scale(0.63,0.86);overflow:hidden;">2600</div>
<div class="a" style="left:667px;top:60px;width:1px;height:12px;background:#727272"></div>
<div class="a" style="left:670px;top:70px;width:1px;height:2px;background:#575757"></div>
<div class="a" style="left:673px;top:70px;width:1px;height:2px;background:#575757"></div>
<div class="a" style="left:676px;top:70px;width:1px;height:2px;background:#575757"></div>
<div class="a" style="left:680px;top:68px;width:1px;height:4px;background:#606060"></div>
<div class="a" style="left:683px;top:70px;width:1px;height:2px;background:#575757"></div>
<div class="a" style="left:686px;top:70px;width:1px;height:2px;background:#575757"></div>
<div class="a" style="left:689px;top:70px;width:1px;height:2px;background:#575757"></div>
<div class="t" style="left:668.5px;top:63.6px;font-size:9.5px;line-height:9.5px;color:#b4b4b4;transform:scale(0.63,0.86);overflow:hidden;">2800</div>
<div class="a" style="left:693px;top:60px;width:1px;height:12px;background:#727272"></div>
<div class="a" style="left:696px;top:70px;width:1px;height:2px;background:#575757"></div>
<div class="a" style="left:699px;top:70px;width:1px;height:2px;background:#575757"></div>
<div class="a" style="left:702px;top:70px;width:1px;height:2px;background:#575757"></div>
<div class="a" style="left:706px;top:68px;width:1px;height:4px;background:#606060"></div>
<div class="a" style="left:709px;top:70px;width:1px;height:2px;background:#575757"></div>
<div class="a" style="left:712px;top:70px;width:1px;height:2px;background:#575757"></div>
<div class="a" style="left:715px;top:70px;width:1px;height:2px;background:#575757"></div>
<div class="t" style="left:694.4px;top:63.6px;font-size:9.5px;line-height:9.5px;color:#b4b4b4;transform:scale(0.63,0.86);overflow:hidden;">3000</div>
<div class="a" style="left:719px;top:60px;width:1px;height:12px;background:#727272"></div>
<div class="a" style="left:722px;top:70px;width:1px;height:2px;background:#575757"></div>
<div class="a" style="left:725px;top:70px;width:1px;height:2px;background:#575757"></div>
<div class="a" style="left:728px;top:70px;width:1px;height:2px;background:#575757"></div>
<div class="a" style="left:732px;top:68px;width:1px;height:4px;background:#606060"></div>
<div class="a" style="left:735px;top:70px;width:1px;height:2px;background:#575757"></div>
<div class="a" style="left:738px;top:70px;width:1px;height:2px;background:#575757"></div>
<div class="a" style="left:741px;top:70px;width:1px;height:2px;background:#575757"></div>
<div class="t" style="left:720.4px;top:63.6px;font-size:9.5px;line-height:9.5px;color:#b4b4b4;transform:scale(0.63,0.86);overflow:hidden;">3200</div>
<div class="a" style="left:745px;top:60px;width:1px;height:12px;background:#727272"></div>
<div class="a" style="left:748px;top:70px;width:1px;height:2px;background:#575757"></div>
<div class="a" style="left:751px;top:70px;width:1px;height:2px;background:#575757"></div>
<div class="a" style="left:754px;top:70px;width:1px;height:2px;background:#575757"></div>
<div class="a" style="left:758px;top:68px;width:1px;height:4px;background:#606060"></div>
<div class="a" style="left:761px;top:70px;width:1px;height:2px;background:#575757"></div>
<div class="a" style="left:764px;top:70px;width:1px;height:2px;background:#575757"></div>
<div class="a" style="left:767px;top:70px;width:1px;height:2px;background:#575757"></div>
<div class="t" style="left:746.3px;top:63.6px;font-size:9.5px;line-height:9.5px;color:#b4b4b4;transform:scale(0.63,0.86);overflow:hidden;">3400</div>
<div class="a" style="left:770px;top:60px;width:1px;height:12px;background:#727272"></div>
<div class="a" style="left:774px;top:70px;width:1px;height:2px;background:#575757"></div>
<div class="a" style="left:777px;top:70px;width:1px;height:2px;background:#575757"></div>
<div class="a" style="left:780px;top:70px;width:1px;height:2px;background:#575757"></div>
<div class="a" style="left:783px;top:68px;width:1px;height:4px;background:#606060"></div>
<div class="a" style="left:787px;top:70px;width:1px;height:2px;background:#575757"></div>
<div class="a" style="left:790px;top:70px;width:1px;height:2px;background:#575757"></div>
<div class="a" style="left:793px;top:70px;width:1px;height:2px;background:#575757"></div>
<div class="t" style="left:772.3px;top:63.6px;font-size:9.5px;line-height:9.5px;color:#b4b4b4;transform:scale(0.63,0.86);overflow:hidden;">3600</div>
<div class="a" style="left:796px;top:60px;width:1px;height:12px;background:#727272"></div>
<div class="a" style="left:800px;top:70px;width:1px;height:2px;background:#575757"></div>
<div class="a" style="left:803px;top:70px;width:1px;height:2px;background:#575757"></div>
<div class="a" style="left:806px;top:70px;width:1px;height:2px;background:#575757"></div>
<div class="a" style="left:809px;top:68px;width:1px;height:4px;background:#606060"></div>
<div class="a" style="left:813px;top:70px;width:1px;height:2px;background:#575757"></div>
<div class="a" style="left:816px;top:70px;width:1px;height:2px;background:#575757"></div>
<div class="a" style="left:819px;top:70px;width:1px;height:2px;background:#575757"></div>
<div class="t" style="left:798.2px;top:63.6px;font-size:9.5px;line-height:9.5px;color:#b4b4b4;transform:scale(0.63,0.86);overflow:hidden;">3800</div>
<div class="a" style="left:822px;top:60px;width:1px;height:12px;background:#727272"></div>
<div class="a" style="left:826px;top:70px;width:1px;height:2px;background:#575757"></div>
<div class="a" style="left:829px;top:70px;width:1px;height:2px;background:#575757"></div>
<div class="a" style="left:832px;top:70px;width:1px;height:2px;background:#575757"></div>
<div class="a" style="left:835px;top:68px;width:1px;height:4px;background:#606060"></div>
<div class="a" style="left:839px;top:70px;width:1px;height:2px;background:#575757"></div>
<div class="a" style="left:842px;top:70px;width:1px;height:2px;background:#575757"></div>
<div class="a" style="left:845px;top:70px;width:1px;height:2px;background:#575757"></div>
<div class="t" style="left:824.2px;top:63.6px;font-size:9.5px;line-height:9.5px;color:#b4b4b4;transform:scale(0.63,0.86);overflow:hidden;">4000</div>
<div class="a" style="left:848px;top:60px;width:1px;height:12px;background:#727272"></div>
<div class="a" style="left:852px;top:70px;width:1px;height:2px;background:#575757"></div>
<div class="a" style="left:855px;top:70px;width:1px;height:2px;background:#575757"></div>
<div class="a" style="left:858px;top:70px;width:1px;height:2px;background:#575757"></div>
<div class="t" style="left:850.1px;top:63.6px;font-size:9.5px;line-height:9.5px;color:#b4b4b4;transform:scale(0.63,0.86);overflow:hidden;">4200</div>
<div class="a" style="left:27px;top:73px;width:9px;height:1px;background:#7a7a7a"></div>
<div class="a" style="left:34px;top:76px;width:2px;height:1px;background:#575757"></div>
<div class="a" style="left:34px;top:80px;width:2px;height:1px;background:#575757"></div>
<div class="a" style="left:34px;top:83px;width:2px;height:1px;background:#575757"></div>
<div class="a" style="left:32px;top:87px;width:4px;height:1px;background:#606060"></div>
<div class="a" style="left:34px;top:90px;width:2px;height:1px;background:#575757"></div>
<div class="a" style="left:34px;top:94px;width:2px;height:1px;background:#575757"></div>
<div class="a" style="left:34px;top:98px;width:2px;height:1px;background:#575757"></div>
<div class="t" style="left:26.6px;top:74.9px;font-size:9px;line-height:7px;color:#bcbcbc;transform:scale(0.74,0.82);transform-origin:0 0">8</div>
<div class="t" style="left:26.6px;top:82.5px;font-size:9px;line-height:7px;color:#bcbcbc;transform:scale(0.74,0.82);transform-origin:0 0">0</div>
<div class="t" style="left:26.6px;top:90.1px;font-size:9px;line-height:7px;color:#bcbcbc;transform:scale(0.74,0.82);transform-origin:0 0">0</div>
<div class="a" style="left:27px;top:101px;width:9px;height:1px;background:#7a7a7a"></div>
<div class="a" style="left:34px;top:105px;width:2px;height:1px;background:#575757"></div>
<div class="a" style="left:34px;top:108px;width:2px;height:1px;background:#575757"></div>
<div class="a" style="left:34px;top:112px;width:2px;height:1px;background:#575757"></div>
<div class="a" style="left:32px;top:115px;width:4px;height:1px;background:#606060"></div>
<div class="a" style="left:34px;top:119px;width:2px;height:1px;background:#575757"></div>
<div class="a" style="left:34px;top:123px;width:2px;height:1px;background:#575757"></div>
<div class="a" style="left:34px;top:126px;width:2px;height:1px;background:#575757"></div>
<div class="t" style="left:26.6px;top:103.5px;font-size:9px;line-height:7px;color:#bcbcbc;transform:scale(0.74,0.82);transform-origin:0 0">6</div>
<div class="t" style="left:26.6px;top:111.1px;font-size:9px;line-height:7px;color:#bcbcbc;transform:scale(0.74,0.82);transform-origin:0 0">0</div>
<div class="t" style="left:26.6px;top:118.7px;font-size:9px;line-height:7px;color:#bcbcbc;transform:scale(0.74,0.82);transform-origin:0 0">0</div>
<div class="a" style="left:27px;top:130px;width:9px;height:1px;background:#7a7a7a"></div>
<div class="a" style="left:34px;top:133px;width:2px;height:1px;background:#575757"></div>
<div class="a" style="left:34px;top:137px;width:2px;height:1px;background:#575757"></div>
<div class="a" style="left:34px;top:141px;width:2px;height:1px;background:#575757"></div>
<div class="a" style="left:32px;top:144px;width:4px;height:1px;background:#606060"></div>
<div class="a" style="left:34px;top:148px;width:2px;height:1px;background:#575757"></div>
<div class="a" style="left:34px;top:151px;width:2px;height:1px;background:#575757"></div>
<div class="a" style="left:34px;top:155px;width:2px;height:1px;background:#575757"></div>
<div class="t" style="left:26.6px;top:132.1px;font-size:9px;line-height:7px;color:#bcbcbc;transform:scale(0.74,0.82);transform-origin:0 0">4</div>
<div class="t" style="left:26.6px;top:139.7px;font-size:9px;line-height:7px;color:#bcbcbc;transform:scale(0.74,0.82);transform-origin:0 0">0</div>
<div class="t" style="left:26.6px;top:147.3px;font-size:9px;line-height:7px;color:#bcbcbc;transform:scale(0.74,0.82);transform-origin:0 0">0</div>
<div class="a" style="left:27px;top:158px;width:9px;height:1px;background:#7a7a7a"></div>
<div class="a" style="left:34px;top:162px;width:2px;height:1px;background:#575757"></div>
<div class="a" style="left:34px;top:166px;width:2px;height:1px;background:#575757"></div>
<div class="a" style="left:34px;top:169px;width:2px;height:1px;background:#575757"></div>
<div class="a" style="left:32px;top:173px;width:4px;height:1px;background:#606060"></div>
<div class="a" style="left:34px;top:176px;width:2px;height:1px;background:#575757"></div>
<div class="a" style="left:34px;top:180px;width:2px;height:1px;background:#575757"></div>
<div class="a" style="left:34px;top:183px;width:2px;height:1px;background:#575757"></div>
<div class="t" style="left:26.6px;top:160.7px;font-size:9px;line-height:7px;color:#bcbcbc;transform:scale(0.74,0.82);transform-origin:0 0">2</div>
<div class="t" style="left:26.6px;top:168.3px;font-size:9px;line-height:7px;color:#bcbcbc;transform:scale(0.74,0.82);transform-origin:0 0">0</div>
<div class="t" style="left:26.6px;top:175.9px;font-size:9px;line-height:7px;color:#bcbcbc;transform:scale(0.74,0.82);transform-origin:0 0">0</div>
<div class="a" style="left:27px;top:187px;width:9px;height:1px;background:#7a7a7a"></div>
<div class="a" style="left:34px;top:191px;width:2px;height:1px;background:#575757"></div>
<div class="a" style="left:34px;top:194px;width:2px;height:1px;background:#575757"></div>
<div class="a" style="left:34px;top:198px;width:2px;height:1px;background:#575757"></div>
<div class="a" style="left:32px;top:201px;width:4px;height:1px;background:#606060"></div>
<div class="a" style="left:34px;top:205px;width:2px;height:1px;background:#575757"></div>
<div class="a" style="left:34px;top:208px;width:2px;height:1px;background:#575757"></div>
<div class="a" style="left:34px;top:212px;width:2px;height:1px;background:#575757"></div>
<div class="t" style="left:26.6px;top:189.3px;font-size:9px;line-height:7px;color:#bcbcbc;transform:scale(0.74,0.82);transform-origin:0 0">0</div>
<div class="a" style="left:27px;top:216px;width:9px;height:1px;background:#7a7a7a"></div>
<div class="a" style="left:34px;top:219px;width:2px;height:1px;background:#575757"></div>
<div class="a" style="left:34px;top:223px;width:2px;height:1px;background:#575757"></div>
<div class="a" style="left:34px;top:226px;width:2px;height:1px;background:#575757"></div>
<div class="a" style="left:32px;top:230px;width:4px;height:1px;background:#606060"></div>
<div class="a" style="left:34px;top:233px;width:2px;height:1px;background:#575757"></div>
<div class="a" style="left:34px;top:237px;width:2px;height:1px;background:#575757"></div>
<div class="a" style="left:34px;top:241px;width:2px;height:1px;background:#575757"></div>
<div class="t" style="left:26.6px;top:217.9px;font-size:9px;line-height:7px;color:#bcbcbc;transform:scale(0.74,0.82);transform-origin:0 0">2</div>
<div class="t" style="left:26.6px;top:225.5px;font-size:9px;line-height:7px;color:#bcbcbc;transform:scale(0.74,0.82);transform-origin:0 0">0</div>
<div class="t" style="left:26.6px;top:233.1px;font-size:9px;line-height:7px;color:#bcbcbc;transform:scale(0.74,0.82);transform-origin:0 0">0</div>
<div class="a" style="left:27px;top:244px;width:9px;height:1px;background:#7a7a7a"></div>
<div class="a" style="left:34px;top:248px;width:2px;height:1px;background:#575757"></div>
<div class="a" style="left:34px;top:251px;width:2px;height:1px;background:#575757"></div>
<div class="a" style="left:34px;top:255px;width:2px;height:1px;background:#575757"></div>
<div class="a" style="left:32px;top:258px;width:4px;height:1px;background:#606060"></div>
<div class="a" style="left:34px;top:262px;width:2px;height:1px;background:#575757"></div>
<div class="a" style="left:34px;top:266px;width:2px;height:1px;background:#575757"></div>
<div class="a" style="left:34px;top:269px;width:2px;height:1px;background:#575757"></div>
<div class="t" style="left:26.6px;top:246.5px;font-size:9px;line-height:7px;color:#bcbcbc;transform:scale(0.74,0.82);transform-origin:0 0">4</div>
<div class="t" style="left:26.6px;top:254.1px;font-size:9px;line-height:7px;color:#bcbcbc;transform:scale(0.74,0.82);transform-origin:0 0">0</div>
<div class="t" style="left:26.6px;top:261.7px;font-size:9px;line-height:7px;color:#bcbcbc;transform:scale(0.74,0.82);transform-origin:0 0">0</div>
<div class="a" style="left:27px;top:273px;width:9px;height:1px;background:#7a7a7a"></div>
<div class="a" style="left:34px;top:276px;width:2px;height:1px;background:#575757"></div>
<div class="a" style="left:34px;top:280px;width:2px;height:1px;background:#575757"></div>
<div class="a" style="left:34px;top:284px;width:2px;height:1px;background:#575757"></div>
<div class="a" style="left:32px;top:287px;width:4px;height:1px;background:#606060"></div>
<div class="a" style="left:34px;top:291px;width:2px;height:1px;background:#575757"></div>
<div class="a" style="left:34px;top:294px;width:2px;height:1px;background:#575757"></div>
<div class="a" style="left:34px;top:298px;width:2px;height:1px;background:#575757"></div>
<div class="t" style="left:26.6px;top:275.1px;font-size:9px;line-height:7px;color:#bcbcbc;transform:scale(0.74,0.82);transform-origin:0 0">6</div>
<div class="t" style="left:26.6px;top:282.7px;font-size:9px;line-height:7px;color:#bcbcbc;transform:scale(0.74,0.82);transform-origin:0 0">0</div>
<div class="t" style="left:26.6px;top:290.3px;font-size:9px;line-height:7px;color:#bcbcbc;transform:scale(0.74,0.82);transform-origin:0 0">0</div>
<div class="a" style="left:27px;top:301px;width:9px;height:1px;background:#7a7a7a"></div>
<div class="a" style="left:34px;top:305px;width:2px;height:1px;background:#575757"></div>
<div class="a" style="left:34px;top:309px;width:2px;height:1px;background:#575757"></div>
<div class="a" style="left:34px;top:312px;width:2px;height:1px;background:#575757"></div>
<div class="a" style="left:32px;top:316px;width:4px;height:1px;background:#606060"></div>
<div class="a" style="left:34px;top:319px;width:2px;height:1px;background:#575757"></div>
<div class="a" style="left:34px;top:323px;width:2px;height:1px;background:#575757"></div>
<div class="a" style="left:34px;top:326px;width:2px;height:1px;background:#575757"></div>
<div class="t" style="left:26.6px;top:303.7px;font-size:9px;line-height:7px;color:#bcbcbc;transform:scale(0.74,0.82);transform-origin:0 0">8</div>
<div class="t" style="left:26.6px;top:311.3px;font-size:9px;line-height:7px;color:#bcbcbc;transform:scale(0.74,0.82);transform-origin:0 0">0</div>
<div class="t" style="left:26.6px;top:318.9px;font-size:9px;line-height:7px;color:#bcbcbc;transform:scale(0.74,0.82);transform-origin:0 0">0</div>
<div class="a" style="left:27px;top:330px;width:9px;height:1px;background:#7a7a7a"></div>
<div class="a" style="left:34px;top:334px;width:2px;height:1px;background:#575757"></div>
<div class="a" style="left:34px;top:337px;width:2px;height:1px;background:#575757"></div>
<div class="a" style="left:34px;top:341px;width:2px;height:1px;background:#575757"></div>
<div class="a" style="left:32px;top:344px;width:4px;height:1px;background:#606060"></div>
<div class="a" style="left:34px;top:348px;width:2px;height:1px;background:#575757"></div>
<div class="a" style="left:34px;top:351px;width:2px;height:1px;background:#575757"></div>
<div class="a" style="left:34px;top:355px;width:2px;height:1px;background:#575757"></div>
<div class="t" style="left:26.6px;top:332.3px;font-size:9px;line-height:7px;color:#bcbcbc;transform:scale(0.74,0.7);transform-origin:0 0">1</div>
<div class="t" style="left:26.6px;top:338.9px;font-size:9px;line-height:7px;color:#bcbcbc;transform:scale(0.74,0.7);transform-origin:0 0">0</div>
<div class="t" style="left:26.6px;top:345.5px;font-size:9px;line-height:7px;color:#bcbcbc;transform:scale(0.74,0.7);transform-origin:0 0">0</div>
<div class="t" style="left:26.6px;top:352.1px;font-size:9px;line-height:7px;color:#bcbcbc;transform:scale(0.74,0.7);transform-origin:0 0">0</div>
<div class="a" style="left:27px;top:359px;width:9px;height:1px;background:#7a7a7a"></div>
<div class="a" style="left:34px;top:362px;width:2px;height:1px;background:#575757"></div>
<div class="a" style="left:34px;top:366px;width:2px;height:1px;background:#575757"></div>
<div class="a" style="left:34px;top:369px;width:2px;height:1px;background:#575757"></div>
<div class="a" style="left:32px;top:373px;width:4px;height:1px;background:#606060"></div>
<div class="a" style="left:34px;top:376px;width:2px;height:1px;background:#575757"></div>
<div class="a" style="left:34px;top:380px;width:2px;height:1px;background:#575757"></div>
<div class="a" style="left:34px;top:384px;width:2px;height:1px;background:#575757"></div>
<div class="t" style="left:26.6px;top:360.9px;font-size:9px;line-height:7px;color:#bcbcbc;transform:scale(0.74,0.7);transform-origin:0 0">1</div>
<div class="t" style="left:26.6px;top:367.5px;font-size:9px;line-height:7px;color:#bcbcbc;transform:scale(0.74,0.7);transform-origin:0 0">2</div>
<div class="t" style="left:26.6px;top:374.1px;font-size:9px;line-height:7px;color:#bcbcbc;transform:scale(0.74,0.7);transform-origin:0 0">0</div>
<div class="t" style="left:26.6px;top:380.7px;font-size:9px;line-height:7px;color:#bcbcbc;transform:scale(0.74,0.7);transform-origin:0 0">0</div>
<div class="a" style="left:27px;top:387px;width:9px;height:1px;background:#7a7a7a"></div>
<div class="a" style="left:34px;top:391px;width:2px;height:1px;background:#575757"></div>
<div class="a" style="left:34px;top:394px;width:2px;height:1px;background:#575757"></div>
<div class="a" style="left:34px;top:398px;width:2px;height:1px;background:#575757"></div>
<div class="a" style="left:32px;top:402px;width:4px;height:1px;background:#606060"></div>
<div class="a" style="left:34px;top:405px;width:2px;height:1px;background:#575757"></div>
<div class="a" style="left:34px;top:409px;width:2px;height:1px;background:#575757"></div>
<div class="a" style="left:34px;top:412px;width:2px;height:1px;background:#575757"></div>
<div class="t" style="left:26.6px;top:389.5px;font-size:9px;line-height:7px;color:#bcbcbc;transform:scale(0.74,0.7);transform-origin:0 0">1</div>
<div class="t" style="left:26.6px;top:396.1px;font-size:9px;line-height:7px;color:#bcbcbc;transform:scale(0.74,0.7);transform-origin:0 0">4</div>
<div class="t" style="left:26.6px;top:402.7px;font-size:9px;line-height:7px;color:#bcbcbc;transform:scale(0.74,0.7);transform-origin:0 0">0</div>
<div class="t" style="left:26.6px;top:409.3px;font-size:9px;line-height:7px;color:#bcbcbc;transform:scale(0.74,0.7);transform-origin:0 0">0</div>
<div class="a" style="left:27px;top:416px;width:9px;height:1px;background:#7a7a7a"></div>
<div class="a" style="left:34px;top:419px;width:2px;height:1px;background:#575757"></div>
<div class="a" style="left:34px;top:423px;width:2px;height:1px;background:#575757"></div>
<div class="a" style="left:34px;top:427px;width:2px;height:1px;background:#575757"></div>
<div class="a" style="left:32px;top:430px;width:4px;height:1px;background:#606060"></div>
<div class="a" style="left:34px;top:434px;width:2px;height:1px;background:#575757"></div>
<div class="a" style="left:34px;top:437px;width:2px;height:1px;background:#575757"></div>
<div class="a" style="left:34px;top:441px;width:2px;height:1px;background:#575757"></div>
<div class="t" style="left:26.6px;top:418.1px;font-size:9px;line-height:7px;color:#bcbcbc;transform:scale(0.74,0.7);transform-origin:0 0">1</div>
<div class="t" style="left:26.6px;top:424.7px;font-size:9px;line-height:7px;color:#bcbcbc;transform:scale(0.74,0.7);transform-origin:0 0">6</div>
<div class="t" style="left:26.6px;top:431.3px;font-size:9px;line-height:7px;color:#bcbcbc;transform:scale(0.74,0.7);transform-origin:0 0">0</div>
<div class="t" style="left:26.6px;top:437.9px;font-size:9px;line-height:7px;color:#bcbcbc;transform:scale(0.74,0.7);transform-origin:0 0">0</div>
<div class="a" style="left:27px;top:444px;width:9px;height:1px;background:#7a7a7a"></div>
<div class="a" style="left:34px;top:448px;width:2px;height:1px;background:#575757"></div>
<div class="a" style="left:34px;top:452px;width:2px;height:1px;background:#575757"></div>
<div class="a" style="left:34px;top:455px;width:2px;height:1px;background:#575757"></div>
<div class="a" style="left:32px;top:459px;width:4px;height:1px;background:#606060"></div>
<div class="a" style="left:34px;top:462px;width:2px;height:1px;background:#575757"></div>
<div class="a" style="left:34px;top:466px;width:2px;height:1px;background:#575757"></div>
<div class="a" style="left:34px;top:469px;width:2px;height:1px;background:#575757"></div>
<div class="t" style="left:26.6px;top:446.7px;font-size:9px;line-height:7px;color:#bcbcbc;transform:scale(0.74,0.7);transform-origin:0 0">1</div>
<div class="t" style="left:26.6px;top:453.3px;font-size:9px;line-height:7px;color:#bcbcbc;transform:scale(0.74,0.7);transform-origin:0 0">8</div>
<div class="t" style="left:26.6px;top:459.9px;font-size:9px;line-height:7px;color:#bcbcbc;transform:scale(0.74,0.7);transform-origin:0 0">0</div>
<div class="t" style="left:26.6px;top:466.5px;font-size:9px;line-height:7px;color:#bcbcbc;transform:scale(0.74,0.7);transform-origin:0 0">0</div>
<div class="a" style="left:27px;top:473px;width:9px;height:1px;background:#7a7a7a"></div>
<div class="a" style="left:34px;top:477px;width:2px;height:1px;background:#575757"></div>
<div class="a" style="left:34px;top:480px;width:2px;height:1px;background:#575757"></div>
<div class="a" style="left:34px;top:484px;width:2px;height:1px;background:#575757"></div>
<div class="a" style="left:32px;top:487px;width:4px;height:1px;background:#606060"></div>
<div class="a" style="left:34px;top:491px;width:2px;height:1px;background:#575757"></div>
<div class="a" style="left:34px;top:494px;width:2px;height:1px;background:#575757"></div>
<div class="a" style="left:34px;top:498px;width:2px;height:1px;background:#575757"></div>
<div class="t" style="left:26.6px;top:475.3px;font-size:9px;line-height:7px;color:#bcbcbc;transform:scale(0.74,0.7);transform-origin:0 0">2</div>
<div class="t" style="left:26.6px;top:481.9px;font-size:9px;line-height:7px;color:#bcbcbc;transform:scale(0.74,0.7);transform-origin:0 0">0</div>
<div class="t" style="left:26.6px;top:488.5px;font-size:9px;line-height:7px;color:#bcbcbc;transform:scale(0.74,0.7);transform-origin:0 0">0</div>
<div class="t" style="left:26.6px;top:495.1px;font-size:9px;line-height:7px;color:#bcbcbc;transform:scale(0.74,0.7);transform-origin:0 0">0</div>
<div class="a" style="left:27px;top:502px;width:9px;height:1px;background:#7a7a7a"></div>
<div class="a" style="left:34px;top:505px;width:2px;height:1px;background:#575757"></div>
<div class="a" style="left:34px;top:509px;width:2px;height:1px;background:#575757"></div>
<div class="a" style="left:34px;top:512px;width:2px;height:1px;background:#575757"></div>
<div class="a" style="left:32px;top:516px;width:4px;height:1px;background:#606060"></div>
<div class="a" style="left:34px;top:519px;width:2px;height:1px;background:#575757"></div>
<div class="a" style="left:34px;top:523px;width:2px;height:1px;background:#575757"></div>
<div class="a" style="left:34px;top:527px;width:2px;height:1px;background:#575757"></div>
<div class="t" style="left:26.6px;top:503.9px;font-size:9px;line-height:7px;color:#bcbcbc;transform:scale(0.74,0.7);transform-origin:0 0">2</div>
<div class="t" style="left:26.6px;top:510.5px;font-size:9px;line-height:7px;color:#bcbcbc;transform:scale(0.74,0.7);transform-origin:0 0">2</div>
<div class="t" style="left:26.6px;top:517.1px;font-size:9px;line-height:7px;color:#bcbcbc;transform:scale(0.74,0.7);transform-origin:0 0">0</div>
<div class="t" style="left:26.6px;top:523.7px;font-size:9px;line-height:7px;color:#bcbcbc;transform:scale(0.74,0.7);transform-origin:0 0">0</div>
<div class="a" style="left:27px;top:530px;width:9px;height:1px;background:#7a7a7a"></div>
<div class="a" style="left:34px;top:534px;width:2px;height:1px;background:#575757"></div>
<div class="a" style="left:34px;top:537px;width:2px;height:1px;background:#575757"></div>
<div class="a" style="left:34px;top:541px;width:2px;height:1px;background:#575757"></div>
<div class="a" style="left:32px;top:544px;width:4px;height:1px;background:#606060"></div>
<div class="a" style="left:34px;top:548px;width:2px;height:1px;background:#575757"></div>
<div class="a" style="left:34px;top:552px;width:2px;height:1px;background:#575757"></div>
<div class="a" style="left:34px;top:555px;width:2px;height:1px;background:#575757"></div>
<div class="t" style="left:26.6px;top:532.5px;font-size:9px;line-height:7px;color:#bcbcbc;transform:scale(0.74,0.7);transform-origin:0 0">2</div>
<div class="t" style="left:26.6px;top:539.1px;font-size:9px;line-height:7px;color:#bcbcbc;transform:scale(0.74,0.7);transform-origin:0 0">4</div>
<div class="t" style="left:26.6px;top:545.7px;font-size:9px;line-height:7px;color:#bcbcbc;transform:scale(0.74,0.7);transform-origin:0 0">0</div>
<div class="t" style="left:26.6px;top:552.3px;font-size:9px;line-height:7px;color:#bcbcbc;transform:scale(0.74,0.7);transform-origin:0 0">0</div>
<div class="a" style="left:27px;top:559px;width:9px;height:1px;background:#7a7a7a"></div>
<div class="a" style="left:34px;top:562px;width:2px;height:1px;background:#575757"></div>
<div class="a" style="left:34px;top:566px;width:2px;height:1px;background:#575757"></div>
<div class="a" style="left:34px;top:570px;width:2px;height:1px;background:#575757"></div>
<div class="a" style="left:32px;top:573px;width:4px;height:1px;background:#606060"></div>
<div class="a" style="left:34px;top:577px;width:2px;height:1px;background:#575757"></div>
<div class="a" style="left:34px;top:580px;width:2px;height:1px;background:#575757"></div>
<div class="a" style="left:34px;top:584px;width:2px;height:1px;background:#575757"></div>
<div class="t" style="left:26.6px;top:561.1px;font-size:9px;line-height:7px;color:#bcbcbc;transform:scale(0.74,0.7);transform-origin:0 0">2</div>
<div class="t" style="left:26.6px;top:567.7px;font-size:9px;line-height:7px;color:#bcbcbc;transform:scale(0.74,0.7);transform-origin:0 0">6</div>
<div class="t" style="left:26.6px;top:574.3px;font-size:9px;line-height:7px;color:#bcbcbc;transform:scale(0.74,0.7);transform-origin:0 0">0</div>
<div class="t" style="left:26.6px;top:580.9px;font-size:9px;line-height:7px;color:#bcbcbc;transform:scale(0.74,0.7);transform-origin:0 0">0</div>
<div class="a" style="left:27px;top:587px;width:9px;height:1px;background:#7a7a7a"></div>
<div class="a" style="left:34px;top:591px;width:2px;height:1px;background:#575757"></div>
<div class="a" style="left:34px;top:595px;width:2px;height:1px;background:#575757"></div>
<div class="a" style="left:34px;top:598px;width:2px;height:1px;background:#575757"></div>
<div class="a" style="left:32px;top:602px;width:4px;height:1px;background:#606060"></div>
<div class="a" style="left:34px;top:605px;width:2px;height:1px;background:#575757"></div>
<div class="a" style="left:34px;top:609px;width:2px;height:1px;background:#575757"></div>
<div class="a" style="left:34px;top:612px;width:2px;height:1px;background:#575757"></div>
<div class="t" style="left:26.6px;top:589.7px;font-size:9px;line-height:7px;color:#bcbcbc;transform:scale(0.74,0.7);transform-origin:0 0">2</div>
<div class="t" style="left:26.6px;top:596.3px;font-size:9px;line-height:7px;color:#bcbcbc;transform:scale(0.74,0.7);transform-origin:0 0">8</div>
<div class="t" style="left:26.6px;top:602.9px;font-size:9px;line-height:7px;color:#bcbcbc;transform:scale(0.74,0.7);transform-origin:0 0">0</div>
<div class="t" style="left:26.6px;top:609.5px;font-size:9px;line-height:7px;color:#bcbcbc;transform:scale(0.74,0.7);transform-origin:0 0">0</div>
<div class="a" style="left:27px;top:616px;width:9px;height:1px;background:#7a7a7a"></div>
<div class="a" style="left:34px;top:620px;width:2px;height:1px;background:#575757"></div>
<div class="a" style="left:34px;top:623px;width:2px;height:1px;background:#575757"></div>
<div class="a" style="left:34px;top:627px;width:2px;height:1px;background:#575757"></div>
<div class="a" style="left:32px;top:630px;width:4px;height:1px;background:#606060"></div>
<div class="a" style="left:34px;top:634px;width:2px;height:1px;background:#575757"></div>
<div class="a" style="left:34px;top:637px;width:2px;height:1px;background:#575757"></div>
<div class="a" style="left:34px;top:641px;width:2px;height:1px;background:#575757"></div>
<div class="t" style="left:26.6px;top:618.3px;font-size:9px;line-height:7px;color:#bcbcbc;transform:scale(0.74,0.7);transform-origin:0 0">3</div>
<div class="t" style="left:26.6px;top:624.9px;font-size:9px;line-height:7px;color:#bcbcbc;transform:scale(0.74,0.7);transform-origin:0 0">0</div>
<div class="t" style="left:26.6px;top:631.5px;font-size:9px;line-height:7px;color:#bcbcbc;transform:scale(0.74,0.7);transform-origin:0 0">0</div>
<div class="t" style="left:26.6px;top:638.1px;font-size:9px;line-height:7px;color:#bcbcbc;transform:scale(0.74,0.7);transform-origin:0 0">0</div>
<div class="a" style="left:27px;top:645px;width:9px;height:1px;background:#7a7a7a"></div>
<div class="a" style="left:34px;top:648px;width:2px;height:1px;background:#575757"></div>
<div class="a" style="left:34px;top:652px;width:2px;height:1px;background:#575757"></div>
<div class="a" style="left:34px;top:655px;width:2px;height:1px;background:#575757"></div>
<div class="a" style="left:32px;top:659px;width:4px;height:1px;background:#606060"></div>
<div class="a" style="left:34px;top:662px;width:2px;height:1px;background:#575757"></div>
<div class="a" style="left:34px;top:666px;width:2px;height:1px;background:#575757"></div>
<div class="a" style="left:34px;top:670px;width:2px;height:1px;background:#575757"></div>
<div class="t" style="left:26.6px;top:646.9px;font-size:9px;line-height:7px;color:#bcbcbc;transform:scale(0.74,0.7);transform-origin:0 0">3</div>
<div class="t" style="left:26.6px;top:653.5px;font-size:9px;line-height:7px;color:#bcbcbc;transform:scale(0.74,0.7);transform-origin:0 0">2</div>
<div class="t" style="left:26.6px;top:660.1px;font-size:9px;line-height:7px;color:#bcbcbc;transform:scale(0.74,0.7);transform-origin:0 0">0</div>
<div class="t" style="left:26.6px;top:666.7px;font-size:9px;line-height:7px;color:#bcbcbc;transform:scale(0.74,0.7);transform-origin:0 0">0</div>
<div class="a" style="left:27px;top:673px;width:9px;height:1px;background:#7a7a7a"></div>
<div class="a" style="left:34px;top:677px;width:2px;height:1px;background:#575757"></div>
<div class="a" style="left:34px;top:680px;width:2px;height:1px;background:#575757"></div>
<div class="a" style="left:34px;top:684px;width:2px;height:1px;background:#575757"></div>
<div class="a" style="left:32px;top:688px;width:4px;height:1px;background:#606060"></div>
<div class="a" style="left:34px;top:691px;width:2px;height:1px;background:#575757"></div>
<div class="a" style="left:34px;top:695px;width:2px;height:1px;background:#575757"></div>
<div class="a" style="left:34px;top:698px;width:2px;height:1px;background:#575757"></div>
<div class="t" style="left:26.6px;top:675.5px;font-size:9px;line-height:7px;color:#bcbcbc;transform:scale(0.74,0.7);transform-origin:0 0">3</div>
<div class="t" style="left:26.6px;top:682.1px;font-size:9px;line-height:7px;color:#bcbcbc;transform:scale(0.74,0.7);transform-origin:0 0">4</div>
<div class="t" style="left:26.6px;top:688.7px;font-size:9px;line-height:7px;color:#bcbcbc;transform:scale(0.74,0.7);transform-origin:0 0">0</div>
<div class="t" style="left:26.6px;top:695.3px;font-size:9px;line-height:7px;color:#bcbcbc;transform:scale(0.74,0.7);transform-origin:0 0">0</div>
<div class="a" style="left:27px;top:702px;width:9px;height:1px;background:#7a7a7a"></div>
<div class="a" style="left:34px;top:705px;width:2px;height:1px;background:#575757"></div>
<div class="a" style="left:34px;top:709px;width:2px;height:1px;background:#575757"></div>
<div class="t" style="left:26.6px;top:704.1px;font-size:9px;line-height:7px;color:#bcbcbc;transform:scale(0.74,0.7);transform-origin:0 0">3</div>
<div class="a" style="left:36px;top:72px;width:823px;height:639px;background:#333333"></div>
<div class="a" style="left:25px;top:711px;width:834px;height:9px;background:#505050"></div>
<div class="a" style="left:25px;top:711px;width:30px;height:9px;background:#464646"></div>
<div class="t" style="left:30px;top:711.80px;font-size:8px;line-height:8px;color:#e8e8e8;transform:scaleX(0.82);">20.66%</div>
<div class="t" style="left:71px;top:711.80px;font-size:8px;line-height:8px;color:#dadada;transform:scaleX(0.8);">2232 px x 2854 px (250 ppi)</div>
<div class="t" style="left:165px;top:711.80px;font-size:8px;line-height:8px;color:#dadada;">)</div>
<div class="a" style="left:859px;top:60px;width:11px;height:660px;background:#4a4a4a"></div>
<div class="a" style="left:303px;top:187px;width:290px;height:410px;background-color:#fff;background-image:linear-gradient(45deg,#cbcbcb 25%,transparent 25%,transparent 75%,#cbcbcb 75%),linear-gradient(45deg,#cbcbcb 25%,transparent 25%,transparent 75%,#cbcbcb 75%);background-size:10px 10px;background-position:0 0,5px 5px"></div>
<div class="a" style="left:323px;top:72px;width:1px;height:639px;background:rgba(125,228,228,0.85)"></div>
<div class="a" style="left:322px;top:72px;width:1px;height:639px;background:rgba(125,228,228,0.28)"></div>
<div class="a" style="left:324px;top:72px;width:1px;height:639px;background:rgba(125,228,228,0.28)"></div>
<div class="a" style="left:572px;top:72px;width:1px;height:639px;background:rgba(125,228,228,0.85)"></div>
<div class="a" style="left:571px;top:72px;width:1px;height:639px;background:rgba(125,228,228,0.28)"></div>
<div class="a" style="left:573px;top:72px;width:1px;height:639px;background:rgba(125,228,228,0.28)"></div>
<div class="a" style="left:36px;top:210px;width:823px;height:1px;background:rgba(125,228,228,0.85)"></div>
<div class="a" style="left:36px;top:209px;width:823px;height:1px;background:rgba(125,228,228,0.28)"></div>
<div class="a" style="left:36px;top:211px;width:823px;height:1px;background:rgba(125,228,228,0.28)"></div>
<div class="a" style="left:36px;top:574px;width:823px;height:1px;background:rgba(125,228,228,0.85)"></div>
<div class="a" style="left:36px;top:573px;width:823px;height:1px;background:rgba(125,228,228,0.28)"></div>
<div class="a" style="left:36px;top:575px;width:823px;height:1px;background:rgba(125,228,228,0.28)"></div>
<div class="a" style="left:569px;top:187px;width:1px;height:410px;background:rgba(230,150,190,0.35)"></div>
<div class="a" style="left:327px;top:187px;width:1px;height:410px;background:rgba(230,150,190,0.3)"></div>
<div class="a" style="left:303px;top:570px;width:290px;height:1px;background:rgba(230,150,190,0.35)"></div>
<div class="a" style="left:538px;top:245px;width:5px;height:229px;background:#ebebeb"></div>
<div class="a" style="left:362px;top:245px;width:176px;height:228px;background:#ffffff"></div>
<div class="t" style="left:371.5px;top:250.8px;font-size:11.2px;line-height:12px;color:#d42a3a;letter-spacing:-0.35px;">xfinity</div>
<div class="t" style="left:372px;top:269.36px;font-size:3.9px;line-height:3.9px;color:#222;transform:scaleX(0.88);font-weight:bold;">NovaSpark Solutions</div>
<div class="t" style="left:372px;top:276.40px;font-size:2.9px;line-height:2.9px;color:#777;">Account Number &nbsp; Contact</div>
<div class="t" style="left:372px;top:279.50px;font-size:3.1px;line-height:3.1px;color:#111;font-weight:bold;">8155 20 035 7061971</div>
<div class="t" style="left:372px;top:287.46px;font-size:2.8px;line-height:2.8px;color:#666;">P.O. BOX 4 19</div>
<div class="t" style="left:372px;top:290.46px;font-size:2.8px;line-height:2.8px;color:#666;">FORT WASHINGTON PA 19034 3</div>
<div class="t" style="left:372px;top:293.46px;font-size:2.8px;line-height:2.8px;color:#666;">FOR SERVICE AT 80 40 24</div>
<div class="t" style="left:372px;top:307.75px;font-size:4.1px;line-height:4.1px;color:#3a7ad8;">Thanks for choosing XFINITY</div>
<div class="t" style="left:372px;top:312.35px;font-size:4.1px;line-height:4.1px;color:#3a7ad8;">from Comcast</div>
<div class="t" style="left:372px;top:331.54px;font-size:3.2px;line-height:3.2px;color:#8aa6e2;">Need help?</div>
<div class="t" style="left:372px;top:335.24px;font-size:3.2px;line-height:3.2px;color:#8aa6e2;">Visit xfinity.com/customersupport, or</div>
<div class="t" style="left:372px;top:339.04px;font-size:3.2px;line-height:3.2px;color:#8aa6e2;">call 1-800-XFINITY (1-800-934-6489)</div>
<div class="t" style="left:372px;top:345.74px;font-size:3.2px;line-height:3.2px;color:#8aa6e2;">Ready to move?</div>
<div class="t" style="left:372px;top:349.84px;font-size:3.2px;line-height:3.2px;color:#8aa6e2;">Visit xfinity.com/moving</div>
<div class="t" style="left:372px;top:353.94px;font-size:3.2px;line-height:3.2px;color:#8aa6e2;">and use the My Account app</div>
<div class="t" style="left:453px;top:248.57px;font-size:2.6px;line-height:2.6px;color:#555;">Bill date Jan 17, 2020</div>
<div class="t" style="left:453px;top:251.77px;font-size:2.6px;line-height:2.6px;color:#555;">Services from Jan 27, 2020 to Feb 26, 2020</div>
<div class="t" style="left:519px;top:248.57px;font-size:2.6px;line-height:2.6px;color:#555;">Page 1 of 2</div>
<div class="a" style="left:451px;top:256px;width:80px;height:4.6px;background:#0b5bd3"></div>
<div class="t" style="left:454px;top:256.65px;font-size:3.0px;line-height:3.0px;color:#d8e6ff;font-weight:bold;">Your monthly service summary</div>
<div class="a" style="left:451px;top:260.6px;width:80px;height:58.4px;background:#e7f9fc"></div>
<div class="t" style="left:453px;top:263.92px;font-size:3.05px;line-height:3.05px;color:#333;">Previous balance</div>
<div class="t" style="left:519px;top:263.92px;font-size:3.05px;line-height:3.05px;color:#333;">$32.50</div>
<div class="t" style="left:453px;top:267.72px;font-size:3.05px;line-height:3.05px;color:#4a84e0;">Payment - Thank You Nov 05, 2019</div>
<div class="t" style="left:515px;top:267.72px;font-size:3.05px;line-height:3.05px;color:#4a84e0;">-$32.50 &#10004;</div>
<div class="t" style="left:453px;top:271.32px;font-size:3.05px;line-height:3.05px;color:#111;font-weight:bold;">New charges</div>
<div class="t" style="left:453px;top:275.32px;font-size:3.05px;line-height:3.05px;color:#333;">Bundle</div>
<div class="t" style="left:519px;top:275.32px;font-size:3.05px;line-height:3.05px;color:#333;">$76.00</div>
<div class="t" style="left:453px;top:279.32px;font-size:3.05px;line-height:3.05px;color:#333;">Additional services and equipment</div>
<div class="t" style="left:519px;top:279.32px;font-size:3.05px;line-height:3.05px;color:#333;">$10.00</div>
<div class="t" style="left:453px;top:283.32px;font-size:3.05px;line-height:3.05px;color:#333;">Other charges and credits</div>
<div class="t" style="left:519px;top:283.32px;font-size:3.05px;line-height:3.05px;color:#333;">$.60</div>
<div class="t" style="left:453px;top:287.82px;font-size:3.05px;line-height:3.05px;color:#333;">Taxes and fees</div>
<div class="t" style="left:519px;top:287.82px;font-size:3.05px;line-height:3.05px;color:#333;">$.60</div>
<div class="t" style="left:453px;top:309.46px;font-size:3.9px;line-height:3.9px;color:#111;transform:scaleX(0.9);font-weight:bold;">Amount due</div>
<div class="t" style="left:508.8px;top:308.44px;font-size:6.1px;line-height:6.1px;color:#111;transform:scaleX(0.79);font-weight:bold;">$106.20</div>
<div class="t" style="left:494px;top:315.57px;font-size:2.6px;line-height:2.6px;color:#333;">Payment due Feb 05, 2020</div>
<svg class="a" style="left:531px;top:302px;" width="7" height="13.6" viewBox="0 0 7 13.6"><rect width="7" height="13.6" fill="#1a1a1a"/><rect x="2.2" y="8.0" width="1.2" height="1.2" fill="#e8e8e8"/><rect x="3.0" y="8.5" width="1.2" height="1.2" fill="#e8e8e8"/><rect x="1.5" y="5.9" width="1.2" height="1.2" fill="#e8e8e8"/><rect x="4.3" y="5.3" width="1.2" height="1.2" fill="#e8e8e8"/><rect x="5.2" y="10.7" width="1.2" height="1.2" fill="#e8e8e8"/><rect x="3.3" y="5.4" width="1.2" height="1.2" fill="#e8e8e8"/><rect x="3.8" y="3.8" width="1.2" height="1.2" fill="#e8e8e8"/><rect x="5.0" y="9.8" width="1.2" height="1.2" fill="#e8e8e8"/><rect x="1.4" y="11.5" width="1.2" height="1.2" fill="#e8e8e8"/><rect x="4.6" y="2.9" width="1.2" height="1.2" fill="#e8e8e8"/><rect x="2.2" y="4.3" width="1.2" height="1.2" fill="#e8e8e8"/><rect x="4.6" y="3.0" width="1.2" height="1.2" fill="#e8e8e8"/><rect x="1.0" y="2.5" width="1.2" height="1.2" fill="#e8e8e8"/><rect x="3.6" y="10.7" width="1.2" height="1.2" fill="#e8e8e8"/><rect x="3.1" y="1.6" width="1.2" height="1.2" fill="#e8e8e8"/></svg>
<div class="a" style="left:447.2px;top:354px;width:3px;height:3px;background:#111;border-radius:50%"></div>
<div class="t" style="left:453px;top:354.47px;font-size:3.5px;line-height:3.5px;color:#111;font-weight:bold;">Manage your services online or on the go</div>
<div class="t" style="left:453px;top:358.64px;font-size:3.2px;line-height:3.2px;color:#333;">Access the one-stop destination to pay your bill and</div>
<div class="t" style="left:453px;top:362.04px;font-size:3.2px;line-height:3.2px;color:#333;">manage your services. Visit xfinity.com/myaccount or</div>
<div class="t" style="left:453px;top:365.54px;font-size:3.2px;line-height:3.2px;color:#333;">use the My Account app.</div>
<div class="t" style="left:453px;top:373.49px;font-size:3.3px;line-height:3.3px;color:#111;font-weight:bold;">Service updates</div>
<div class="t" style="left:453px;top:377.06px;font-size:2.8px;line-height:2.8px;color:#444;">Review "additional information" section for upcoming service</div>
<div class="t" style="left:453px;top:380.06px;font-size:2.8px;line-height:2.8px;color:#444;">updates.</div>
<div class="t" style="left:372px;top:396.32px;font-size:2.5px;line-height:2.5px;color:#555;">Detach the bottom portion of this bill and enclose with your payment</div>
<div class="a" style="left:372px;top:400.6px;width:1px;height:0.8px;background:#e46"></div>
<div class="a" style="left:374px;top:400.6px;width:1px;height:0.8px;background:#2ab"></div>
<div class="a" style="left:376px;top:400.6px;width:1px;height:0.8px;background:#888"></div>
<div class="a" style="left:378px;top:400.6px;width:1px;height:0.8px;background:#e46"></div>
<div class="a" style="left:380px;top:400.6px;width:1px;height:0.8px;background:#2ab"></div>
<div class="a" style="left:382px;top:400.6px;width:1px;height:0.8px;background:#888"></div>
<div class="a" style="left:384px;top:400.6px;width:1px;height:0.8px;background:#e46"></div>
<div class="a" style="left:386px;top:400.6px;width:1px;height:0.8px;background:#2ab"></div>
<div class="a" style="left:388px;top:400.6px;width:1px;height:0.8px;background:#888"></div>
<div class="a" style="left:390px;top:400.6px;width:1px;height:0.8px;background:#e46"></div>
<div class="a" style="left:392px;top:400.6px;width:1px;height:0.8px;background:#2ab"></div>
<div class="a" style="left:394px;top:400.6px;width:1px;height:0.8px;background:#888"></div>
<div class="a" style="left:396px;top:400.6px;width:1px;height:0.8px;background:#e46"></div>
<div class="a" style="left:398px;top:400.6px;width:1px;height:0.8px;background:#2ab"></div>
<div class="a" style="left:400px;top:400.6px;width:1px;height:0.8px;background:#888"></div>
<div class="a" style="left:402px;top:400.6px;width:1px;height:0.8px;background:#e46"></div>
<div class="a" style="left:404px;top:400.6px;width:1px;height:0.8px;background:#aaa"></div>
<div class="a" style="left:406px;top:400.6px;width:1px;height:0.8px;background:#aaa"></div>
<div class="a" style="left:408px;top:400.6px;width:1px;height:0.8px;background:#aaa"></div>
<div class="a" style="left:410px;top:400.6px;width:1px;height:0.8px;background:#aaa"></div>
<div class="a" style="left:412px;top:400.6px;width:1px;height:0.8px;background:#aaa"></div>
<div class="a" style="left:414px;top:400.6px;width:1px;height:0.8px;background:#aaa"></div>
<div class="a" style="left:416px;top:400.6px;width:1px;height:0.8px;background:#aaa"></div>
<div class="a" style="left:418px;top:400.6px;width:1px;height:0.8px;background:#aaa"></div>
<div class="a" style="left:420px;top:400.6px;width:1px;height:0.8px;background:#aaa"></div>
<div class="a" style="left:422px;top:400.6px;width:1px;height:0.8px;background:#aaa"></div>
<div class="a" style="left:424px;top:400.6px;width:1px;height:0.8px;background:#aaa"></div>
<div class="a" style="left:426px;top:400.6px;width:1px;height:0.8px;background:#aaa"></div>
<div class="a" style="left:428px;top:400.6px;width:1px;height:0.8px;background:#aaa"></div>
<div class="a" style="left:430px;top:400.6px;width:1px;height:0.8px;background:#aaa"></div>
<div class="a" style="left:432px;top:400.6px;width:1px;height:0.8px;background:#aaa"></div>
<div class="a" style="left:434px;top:400.6px;width:1px;height:0.8px;background:#aaa"></div>
<div class="a" style="left:436px;top:400.6px;width:1px;height:0.8px;background:#aaa"></div>
<div class="a" style="left:438px;top:400.6px;width:1px;height:0.8px;background:#aaa"></div>
<div class="a" style="left:440px;top:400.6px;width:1px;height:0.8px;background:#aaa"></div>
<div class="a" style="left:442px;top:400.6px;width:1px;height:0.8px;background:#aaa"></div>
<div class="a" style="left:444px;top:400.6px;width:1px;height:0.8px;background:#aaa"></div>
<div class="a" style="left:446px;top:400.6px;width:1px;height:0.8px;background:#aaa"></div>
<div class="a" style="left:448px;top:400.6px;width:1px;height:0.8px;background:#aaa"></div>
<div class="a" style="left:450px;top:400.6px;width:1px;height:0.8px;background:#aaa"></div>
<div class="t" style="left:371.5px;top:403.8px;font-size:11.2px;line-height:12px;color:#d42a3a;letter-spacing:-0.35px;">xfinity</div>
<div class="t" style="left:372px;top:416.62px;font-size:2.5px;line-height:2.5px;color:#444;">8000 21 8AVE-47 NEW SENN BAMPA 23-63 SOTIC</div>
<div class="t" style="left:372px;top:419.62px;font-size:2.5px;line-height:2.5px;color:#444;">COMCAST 91 3 8 BOXA POLE COM3 19 USSIX</div>
<div class="t" style="left:372px;top:425.51px;font-size:2.7px;line-height:2.7px;color:#222;">NovaSpark Solutions 205</div>
<div class="t" style="left:372px;top:428.12px;font-size:2.7px;line-height:2.7px;color:#222;">2500 BEVERLY BLVD STE 700</div>
<div class="t" style="left:372px;top:430.71px;font-size:2.7px;line-height:2.7px;color:#222;">LOS ANGELES CA 90057-3521</div>
<div class="t" style="left:373px;top:461.52px;font-size:3.6px;line-height:3.6px;color:#222;transform:scaleX(0.96);">8 4550820614 1 147000 3RQ9R</div>
<div class="a" style="left:451px;top:392px;width:80px;height:49.7px;background:#e7f9fc"></div>
<div class="t" style="left:453px;top:396.44px;font-size:2.3px;line-height:2.3px;color:#555;">Please write your account number on your check or money order</div>
<div class="t" style="left:453px;top:405.15px;font-size:3.0px;line-height:3.0px;color:#666;">Account number</div>
<div class="t" style="left:496px;top:405.15px;font-size:3.0px;line-height:3.0px;color:#222;font-weight:bold;">8155 20 035 7061971</div>
<div class="t" style="left:453px;top:410.85px;font-size:3.0px;line-height:3.0px;color:#666;">Payment due</div>
<div class="t" style="left:496px;top:410.80px;font-size:3.1px;line-height:3.1px;color:#222;font-weight:bold;">Feb 05, 2020</div>
<div class="t" style="left:453px;top:417.52px;font-size:3.6px;line-height:3.6px;color:#111;font-weight:bold;">Please pay</div>
<div class="t" style="left:496px;top:415.68px;font-size:6.4px;line-height:6.4px;color:#111;transform:scaleX(0.8);font-weight:bold;">$106.20</div>
<div class="t" style="left:453px;top:424.79px;font-size:3.3px;line-height:3.3px;color:#111;font-weight:bold;">Amount enclosed</div>
<div class="a" style="left:495px;top:423.5px;width:33px;height:10px;background:#ffffff"></div>
<div class="t" style="left:497px;top:426.63px;font-size:3.4px;line-height:3.4px;color:#111;font-weight:bold;">$</div>
<div class="t" style="left:496px;top:433.68px;font-size:2.4px;line-height:2.4px;color:#555;text-decoration:underline">Make checks payable to Comcast</div>
<div class="t" style="left:496px;top:436.08px;font-size:2.4px;line-height:2.4px;color:#555;">Do not send cash</div>
<div class="t" style="left:460px;top:444.46px;font-size:2.8px;line-height:2.8px;color:#333;">COMCAST</div>
<div class="t" style="left:460px;top:447.46px;font-size:2.8px;line-height:2.8px;color:#333;">PO BOX 70219</div>
<div class="t" style="left:460px;top:450.46px;font-size:2.8px;line-height:2.8px;color:#333;">PHILADELPHIA PA 19176-0219</div>
<div class="a" style="left:543px;top:245px;width:175px;height:229px;background:#ffffff"></div>
<div class="t" style="left:598px;top:249.68px;font-size:2.4px;line-height:2.4px;color:#666;">2232 2233 0000 0000 0000 0000 000 0000 0000</div>
<div class="t" style="left:699px;top:249.57px;font-size:2.6px;line-height:2.6px;color:#555;">Page 2 of 2</div>
<div class="a" style="left:549px;top:255px;width:80.5px;height:65.6px;background:#efefef"></div>
<div class="a" style="left:631px;top:255px;width:80px;height:65.6px;background:#efefef"></div>
<div class="t" style="left:552px;top:257.40px;font-size:4.0px;line-height:4.0px;color:#cc2233;transform:scaleX(0.92);font-weight:bold;">Just say &#8220;Show me my WiFi Password&#8221;</div>
<div class="t" style="left:552px;top:265.63px;font-size:3.4px;line-height:3.4px;color:#8a8a8a;">Viewing your WiFi password, managing your</div>
<div class="t" style="left:552px;top:270.33px;font-size:3.4px;line-height:3.4px;color:#8a8a8a;">home network, and creating auto and timer</div>
<div class="t" style="left:552px;top:275.03px;font-size:3.4px;line-height:3.4px;color:#8a8a8a;">based filtering has never been easier.</div>
<div class="t" style="left:552px;top:279.73px;font-size:3.4px;line-height:3.4px;color:#8a8a8a;">Enable with your X1 Voice Remote and</div>
<div class="t" style="left:552px;top:284.43px;font-size:3.4px;line-height:3.4px;color:#8a8a8a;">reset with a happy family.</div>
<div class="t" style="left:552px;top:291.83px;font-size:3.4px;line-height:3.4px;color:#8a8a8a;">Discover more ways to access</div>
<div class="t" style="left:552px;top:296.13px;font-size:3.4px;line-height:3.4px;color:#8a8a8a;">XFINITY WiFi at <b style="color:#222">xfinity.com/wifi</b></div>
<svg class="a" style="left:614px;top:305px;" width="13" height="13" viewBox="0 0 13 13"><circle cx="6.5" cy="6.5" r="5.7" fill="#eaf6fb" stroke="#bde8f3" stroke-width="0.8"/><rect x="5.2" y="3" width="2.6" height="5" rx="1.3" fill="#3ac0e0"/><path d="M4 6.5 Q4 9.5 6.5 9.5 Q9 9.5 9 6.5 M6.5 9.5 V11" stroke="#3ac0e0" fill="none" stroke-width="0.7"/></svg>
<svg class="a" style="left:633px;top:257px;" width="5" height="5" viewBox="0 0 5 5"><circle cx="2.5" cy="2.5" r="2" fill="none" stroke="#cc2233" stroke-width="0.7"/><rect x="2" y="1.3" width="1" height="2.5" fill="#cc2233"/></svg>
<div class="t" style="left:639px;top:257.40px;font-size:4.0px;line-height:4.0px;color:#cc2233;transform:scaleX(0.92);font-weight:bold;">&#8220;Thanksgiving recipes on YouTube&#8221;</div>
<div class="t" style="left:634px;top:265.63px;font-size:3.4px;line-height:3.4px;color:#8a8a8a;">XFINITY X1 brings the best of entertainment to</div>
<div class="t" style="left:634px;top:270.33px;font-size:3.4px;line-height:3.4px;color:#8a8a8a;">the biggest screen in the house, including</div>
<div class="t" style="left:634px;top:275.03px;font-size:3.4px;line-height:3.4px;color:#8a8a8a;">YouTube. Look your X1 Voice Remote and</div>
<div class="t" style="left:634px;top:279.73px;font-size:3.4px;line-height:3.4px;color:#8a8a8a;">seek "on YouTube" on the end of any search</div>
<div class="t" style="left:634px;top:284.43px;font-size:3.4px;line-height:3.4px;color:#8a8a8a;">to discover what's trending.</div>
<div class="t" style="left:634px;top:291.83px;font-size:3.4px;line-height:3.4px;color:#8a8a8a;">Sound like the searching and more in a</div>
<div class="t" style="left:634px;top:296.13px;font-size:3.4px;line-height:3.4px;color:#8a8a8a;">watching. Learn more at <b style="color:#222">xfinity.com/x1</b></div>
<div class="a" style="left:678.7px;top:310px;width:9.3px;height:7px;background:#e62117;border-radius:1.5px"></div>
<svg class="a" style="left:681.5px;top:311.5px;" width="4" height="4" viewBox="0 0 4 4"><path d="M0.3 0 L3.6 2 L0.3 4Z" fill="#fff"/></svg>
<div class="t" style="left:688.8px;top:309px;font-size:8px;line-height:8.5px;color:#222;letter-spacing:-0.7px;transform:scaleX(0.8);">YouTube</div>
<svg class="a" style="left:712px;top:302px;" width="6" height="13" viewBox="0 0 6 13"><rect width="6" height="13" fill="#1a1a1a"/><rect x="3.1" y="9.5" width="1.2" height="1.2" fill="#e8e8e8"/><rect x="3.6" y="2.5" width="1.2" height="1.2" fill="#e8e8e8"/><rect x="1.2" y="11.0" width="1.2" height="1.2" fill="#e8e8e8"/><rect x="3.1" y="8.8" width="1.2" height="1.2" fill="#e8e8e8"/><rect x="2.2" y="5.4" width="1.2" height="1.2" fill="#e8e8e8"/><rect x="3.9" y="8.1" width="1.2" height="1.2" fill="#e8e8e8"/><rect x="1.1" y="4.9" width="1.2" height="1.2" fill="#e8e8e8"/><rect x="3.3" y="9.8" width="1.2" height="1.2" fill="#e8e8e8"/><rect x="2.8" y="4.0" width="1.2" height="1.2" fill="#e8e8e8"/><rect x="2.4" y="5.1" width="1.2" height="1.2" fill="#e8e8e8"/><rect x="4.3" y="9.6" width="1.2" height="1.2" fill="#e8e8e8"/><rect x="3.2" y="5.4" width="1.2" height="1.2" fill="#e8e8e8"/><rect x="3.8" y="11.2" width="1.2" height="1.2" fill="#e8e8e8"/></svg>
<div class="a" style="left:550px;top:334.2px;width:161.5px;height:7.3px;background:#0b5bd3"></div>
<div class="t" style="left:552px;top:335.92px;font-size:3.6px;line-height:3.6px;color:#ffffff;font-weight:bold;">Questions? We&#8217;re here for you.</div>
<div class="a" style="left:550px;top:341.5px;width:161.5px;height:45px;background:#efefef"></div>
<svg class="a" style="left:552.5px;top:343px;" width="6" height="11" viewBox="0 0 6 11"><circle cx="3" cy="3" r="2.2" fill="#e8b820"/><path d="M0 10.5 Q0 6 3 6 Q6 6 6 10.5Z" fill="#c81e2e"/></svg>
<div class="t" style="left:564px;top:344.19px;font-size:3.3px;line-height:3.3px;color:#111;">Visit <b>xfinity.com/customersupport</b></div>
<div class="t" style="left:564px;top:347.79px;font-size:3.3px;line-height:3.3px;color:#111;">Call <b>1-800-XFINITY (1-800-934-6489)</b></div>
<div class="t" style="left:564px;top:354.13px;font-size:3.4px;line-height:3.4px;color:#111;font-weight:bold;">Billing support</div>
<div class="t" style="left:564px;top:357.90px;font-size:3.1px;line-height:3.1px;color:#333;">Open 7 am to pm, 7 days a week</div>
<div class="t" style="left:564px;top:364.53px;font-size:3.4px;line-height:3.4px;color:#111;font-weight:bold;">Technical support</div>
<div class="t" style="left:564px;top:368.30px;font-size:3.1px;line-height:3.1px;color:#333;">Open 24 hours, 7 days a week</div>
<div class="t" style="left:564px;top:374.93px;font-size:3.4px;line-height:3.4px;color:#111;font-weight:bold;">Forgot your email or password?</div>
<div class="t" style="left:564px;top:378.69px;font-size:3.1px;line-height:3.1px;color:#333;">Go to xfinity.com/forgotusername</div>
<div class="t" style="left:634px;top:344.30px;font-size:3.1px;line-height:3.1px;color:#333;">Please notify us within 120 days if you do</div>
<div class="t" style="left:634px;top:347.90px;font-size:3.1px;line-height:3.1px;color:#333;">disagree with questions, or charges billed to</div>
<div class="t" style="left:634px;top:351.50px;font-size:3.1px;line-height:3.1px;color:#333;">your account.</div>
<div class="t" style="left:634px;top:358.30px;font-size:3.1px;line-height:3.1px;color:#333;">Find your nearest XFINITY customer service</div>
<div class="t" style="left:634px;top:361.90px;font-size:3.1px;line-height:3.1px;color:#333;">center location and operating hours at</div>
<div class="t" style="left:634px;top:365.50px;font-size:3.1px;line-height:3.1px;color:#333;">xfinity.com/storelocator.</div>
<svg class="a" style="left:685px;top:387.5px;" width="21" height="5.6" viewBox="0 0 21 5.6"><rect x="0.00" y="0" width="1.3" height="5.6" fill="#222"/><rect x="2.00" y="0" width="0.6" height="5.6" fill="#222"/><rect x="5.60" y="0" width="1.3" height="5.6" fill="#222"/><rect x="7.40" y="0" width="1.3" height="5.6" fill="#222"/><rect x="9.00" y="0" width="0.9" height="5.6" fill="#222"/><rect x="16.00" y="0" width="0.6" height="5.6" fill="#222"/><rect x="18.50" y="0" width="0.6" height="5.6" fill="#222"/><rect x="19.40" y="0" width="0.9" height="5.6" fill="#222"/></svg>
<div class="a" style="left:548px;top:397px;width:80.5px;height:7.4px;background:#0b5bd3"></div>
<div class="t" style="left:550px;top:398.77px;font-size:3.5px;line-height:3.5px;color:#ffffff;font-weight:bold;">Additional payment options</div>
<div class="a" style="left:548px;top:404.4px;width:80.5px;height:46.4px;background:#efefef"></div>
<div class="t" style="left:562px;top:407.13px;font-size:3.4px;line-height:3.4px;color:#111;font-weight:bold;">Automatic payment</div>
<div class="t" style="left:562px;top:410.90px;font-size:3.1px;line-height:3.1px;color:#444;">Sign up at xfinity.com/autopayment</div>
<div class="t" style="left:562px;top:417.83px;font-size:3.4px;line-height:3.4px;color:#111;font-weight:bold;">Online</div>
<div class="t" style="left:562px;top:421.30px;font-size:3.1px;line-height:3.1px;color:#444;">Visit xfinity.com/myaccount</div>
<div class="t" style="left:562px;top:428.13px;font-size:3.4px;line-height:3.4px;color:#111;font-weight:bold;">By app</div>
<div class="t" style="left:562px;top:432.30px;font-size:3.1px;line-height:3.1px;color:#444;">Use the My Account app</div>
<div class="t" style="left:562px;top:438.83px;font-size:3.4px;line-height:3.4px;color:#111;font-weight:bold;">By phone</div>
<div class="t" style="left:562px;top:442.90px;font-size:3.1px;line-height:3.1px;color:#444;">Call 1-800-934-6489 (1-800-XFINITY)</div>
<svg class="a" style="left:550px;top:407px;" width="7" height="5" viewBox="0 0 7 5"><path d="M0.5 2.5 L2.5 4.5 L6.5 0.5" stroke="#cfe6c0" fill="none" stroke-width="1"/></svg>
<div class="a" style="left:550.5px;top:416.5px;width:6.5px;height:5px;background:#1f60d0;border-radius:0.6px"></div>
<div class="a" style="left:551.5px;top:418.2px;width:4.5px;height:0.7px;background:#cfe0ff"></div>
<div class="a" style="left:550.8px;top:427.5px;width:5.5px;height:5px;background:#111;border-radius:1px"></div>
<div class="a" style="left:552.5px;top:429.3px;width:2.5px;height:1.2px;background:#ddd;transform:rotate(45deg)"></div>
<div class="a" style="left:551.5px;top:437.5px;width:4px;height:6px;background:#1d4fc8;border-radius:0.8px"></div>
<div class="a" style="left:636px;top:397px;width:79px;height:7.2px;background:#0b5bd3"></div>
<div class="t" style="left:638px;top:398.73px;font-size:3.4px;line-height:3.4px;color:#ffffff;font-weight:bold;">Moving?</div>
<div class="a" style="left:636px;top:404.2px;width:78px;height:44.8px;background:#efefef"></div>
<div class="t" style="left:638px;top:407.24px;font-size:3.2px;line-height:3.2px;color:#666;">Visit <b style="color:#222">xfinity.com/moving</b> today to</div>
<div class="t" style="left:638px;top:411.74px;font-size:3.2px;line-height:3.2px;color:#666;">help you stay connected to all</div>
<div class="t" style="left:638px;top:416.24px;font-size:3.2px;line-height:3.2px;color:#666;">of your XFINITY services.</div>
<div class="t" style="left:683px;top:443.66px;font-size:2.8px;line-height:2.8px;color:#d92030;font-weight:bold;">MOVING</div>
<div class="a" style="left:696px;top:442.3px;width:6px;height:6px;background:#e0182a;border-radius:50%"></div>
<div class="t" style="left:703px;top:443.66px;font-size:2.8px;line-height:2.8px;color:#d92030;font-weight:bold;">EASY</div>
<svg class="a" style="left:688px;top:451px;" width="21" height="5" viewBox="0 0 21 5"><rect x="0.00" y="0" width="0.6" height="5" fill="#222"/><rect x="1.30" y="0" width="1.8" height="5" fill="#222"/><rect x="3.80" y="0" width="0.9" height="5" fill="#222"/><rect x="5.40" y="0" width="0.6" height="5" fill="#222"/><rect x="6.70" y="0" width="1.8" height="5" fill="#222"/><rect x="8.80" y="0" width="0.6" height="5" fill="#222"/><rect x="10.10" y="0" width="1.8" height="5" fill="#222"/><rect x="15.90" y="0" width="0.9" height="5" fill="#222"/><rect x="19.30" y="0" width="0.6" height="5" fill="#222"/><rect x="20.40" y="0" width="1.8" height="5" fill="#222"/></svg>
<div class="a" style="left:870px;top:41px;width:26px;height:679px;background:#535353"></div>
<div class="a" style="left:870px;top:41px;width:1px;height:679px;background:#3e3e3e"></div>
<div class="a" style="left:895px;top:41px;width:1px;height:679px;background:#3e3e3e"></div>
<div class="a" style="left:871px;top:41px;width:24px;height:7px;background:#454545"></div>
<div class="t" style="left:885px;top:40.50px;font-size:8px;line-height:8px;color:#cfcfcf;">&#171;</div>
<svg class="a" style="left:876px;top:57px;" width="14" height="13" viewBox="0 0 14 13"><g fill="#e0e0e0"><rect x="0" y="1" width="5" height="1"/><rect x="0" y="3.5" width="4" height="1"/><rect x="0" y="6" width="3" height="1"/><path d="M12.5 1.5 L13.3 2.3 L7 8.7 L6.2 7.9Z"/><path d="M6 8.2 Q7.4 9.6 6 11.2 Q4.2 12.8 2.3 12.2 Q3.6 11.2 3.7 9.9 Q4.2 8.2 6 8.2Z"/></g></svg>
<svg class="a" style="left:876px;top:77px;" width="14" height="13" viewBox="0 0 14 13"><g fill="#e0e0e0"><rect x="0" y="2.5" width="13" height="1.2"/><circle cx="3.5" cy="3" r="2.3"/><rect x="0" y="9" width="13" height="1.2"/><path d="M13 6 V13 L8 9.5Z"/></g></svg>
<div class="a" style="left:871px;top:97px;width:24px;height:1px;background:#474747"></div>
<div class="t" style="left:876.5px;top:106.50px;font-size:12px;line-height:12px;color:#e6e6e6;">A</div>
<div class="a" style="left:885.5px;top:106px;width:1px;height:13px;background:#e0e0e0"></div>
<div class="t" style="left:877.5px;top:125.00px;font-size:12px;line-height:12px;color:#e6e6e6;font-weight:bold;">&#182;</div>
<div class="a" style="left:871px;top:145px;width:24px;height:1px;background:#474747"></div>
<div class="t" style="left:876px;top:154.50px;font-size:13px;line-height:13px;color:#e6e6e6;font-family:'Liberation Serif',serif;font-style:italic">A</div>
<div class="a" style="left:871px;top:175px;width:24px;height:1px;background:#474747"></div>
<svg class="a" style="left:876px;top:183px;" width="13" height="14" viewBox="0 0 13 14"><g fill="none" stroke="#e0e0e0" stroke-width="1.1"><path d="M6.5 1 L12 4 V10 L6.5 13 L1 10 V4Z"/><path d="M1 4 L6.5 7 L12 4 M6.5 7 V13"/></g></svg>
<div class="a" style="left:871px;top:202px;width:24px;height:1px;background:#474747"></div>
<div class="a" style="left:896px;top:41px;width:184px;height:679px;background:#535353"></div>
<div class="a" style="left:896px;top:41px;width:184px;height:7px;background:#454545"></div>
<div class="t" style="left:1067px;top:40.50px;font-size:8px;line-height:8px;color:#cfcfcf;">&#187;</div>
<div class="a" style="left:1076px;top:41px;width:4px;height:679px;background:#4a4a4a"></div>
<div class="a" style="left:1075px;top:48px;width:1px;height:672px;background:#3e3e3e"></div>
<div class="a" style="left:896px;top:48px;width:180px;height:20px;background:#464646"></div>
<div class="t" style="left:901px;top:54.05px;font-size:8.5px;line-height:8.5px;color:#b9b9b9;transform:scaleX(0.78);">Swatc</div>
<div class="t" style="left:924px;top:54.05px;font-size:8.5px;line-height:8.5px;color:#b9b9b9;transform:scaleX(0.78);">Gradi</div>
<div class="t" style="left:946.5px;top:54.05px;font-size:8.5px;line-height:8.5px;color:#b9b9b9;transform:scaleX(0.78);">Patter</div>
<div class="t" style="left:969px;top:54.05px;font-size:8.5px;line-height:8.5px;color:#b9b9b9;transform:scaleX(0.78);">Histor</div>
<div class="t" style="left:991.5px;top:54.05px;font-size:8.5px;line-height:8.5px;color:#b9b9b9;transform:scaleX(0.78);">Action</div>
<div class="a" style="left:920px;top:50px;width:1px;height:17px;background:#3c3c3c"></div>
<div class="a" style="left:943px;top:50px;width:1px;height:17px;background:#3c3c3c"></div>
<div class="a" style="left:966px;top:50px;width:1px;height:17px;background:#3c3c3c"></div>
<div class="a" style="left:988px;top:50px;width:1px;height:17px;background:#3c3c3c"></div>
<div class="a" style="left:1009px;top:48px;width:40px;height:20px;background:#535353"></div>
<div class="t" style="left:1013px;top:53.80px;font-size:9px;line-height:9px;color:#f2f2f2;transform:scaleX(0.754);font-weight:bold;">Properties</div>
<div class="a" style="left:1064px;top:55.5px;width:8px;height:1.2px;background:#c8c8c8"></div>
<div class="a" style="left:1064px;top:58px;width:8px;height:1.2px;background:#c8c8c8"></div>
<div class="a" style="left:1064px;top:60.5px;width:8px;height:1.2px;background:#c8c8c8"></div>
<div class="a" style="left:896px;top:68px;width:179px;height:24px;background:#535353"></div>
<div class="a" style="left:903px;top:73px;width:13px;height:15px;background:#383838"></div>
<svg class="a" style="left:905px;top:75px;" width="9" height="11" viewBox="0 0 9 11"><path d="M1 0.5 H5.5 L8.5 3.5 V10.5 H1Z M5.5 0.5 V3.5 H8.5" fill="none" stroke="#d0d0d0" stroke-width="0.9"/></svg>
<div class="t" style="left:920px;top:77.30px;font-size:9px;line-height:9px;color:#e0e0e0;transform:scaleX(0.72);">Document</div>
<div class="a" style="left:896px;top:92px;width:170px;height:2px;background:#474747"></div>
<div class="a" style="left:1066px;top:94px;width:9px;height:273px;background:#4b4b4b"></div>
<div class="a" style="left:1067px;top:104px;width:7px;height:222px;background:#5e5e5e"></div>
<svg class="a" style="left:1067px;top:96px;" width="7" height="5" viewBox="0 0 7 5"><path d="M0.8 4 L3.5 1.2 L6.2 4" stroke="#8a8a8a" fill="none" stroke-width="1"/></svg>
<svg class="a" style="left:1067px;top:359px;" width="7" height="5" viewBox="0 0 7 5"><path d="M0.8 1 L3.5 3.8 L6.2 1" stroke="#8a8a8a" fill="none" stroke-width="1"/></svg>
<svg class="a" style="left:899px;top:101px;" width="7" height="5" viewBox="0 0 7 5"><path d="M0.5 0.5 L3.5 3.5 L6.5 0.5" stroke="#9a9a9a" fill="none" stroke-width="1"/></svg>
<div class="t" style="left:910px;top:98.20px;font-size:9px;line-height:9px;color:#f0f0f0;transform:scaleX(0.7);font-weight:bold;">Canvas</div>
<div class="t" style="left:927px;top:115.75px;font-size:8.5px;line-height:8.5px;color:#c8c8c8;transform:scaleX(0.85);">W</div>
<div class="a" style="left:938px;top:114.5px;width:32px;height:11px;background:#434343"></div>
<div class="t" style="left:939.5px;top:116.25px;font-size:7.5px;line-height:7.5px;color:#e6e6e6;transform:scaleX(0.66);">2232 px</div>
<div class="t" style="left:980px;top:115.75px;font-size:8.5px;line-height:8.5px;color:#c0c0c0;transform:scaleX(0.85);">X</div>
<div class="a" style="left:989px;top:114.5px;width:32px;height:11px;background:#4d4d4d"></div>
<div class="t" style="left:992px;top:116.25px;font-size:7.5px;line-height:7.5px;color:#6c6c6c;transform:scaleX(0.66);">0 px</div>
<div class="t" style="left:928px;top:132.75px;font-size:8.5px;line-height:8.5px;color:#c8c8c8;transform:scaleX(0.85);">H</div>
<div class="a" style="left:938px;top:132px;width:32px;height:11px;background:#434343"></div>
<div class="t" style="left:939.5px;top:133.75px;font-size:7.5px;line-height:7.5px;color:#e6e6e6;transform:scaleX(0.66);">2854 px</div>
<div class="t" style="left:980px;top:132.75px;font-size:8.5px;line-height:8.5px;color:#c0c0c0;transform:scaleX(0.85);">Y</div>
<div class="a" style="left:989px;top:132px;width:32px;height:11px;background:#4d4d4d"></div>
<div class="t" style="left:992px;top:133.75px;font-size:7.5px;line-height:7.5px;color:#6c6c6c;transform:scaleX(0.66);">0 px</div>
<svg class="a" style="left:907px;top:122px;" width="7" height="13" viewBox="0 0 7 13"><g fill="none" stroke="#cfcfcf" stroke-width="1.1"><rect x="1" y="0.8" width="5" height="5" rx="2.5"/><rect x="1" y="7" width="5" height="5" rx="2.5"/></g></svg>
<div class="a" style="left:939px;top:152px;width:13px;height:15px;background:#393939"></div>
<svg class="a" style="left:941px;top:154px;" width="9" height="11" viewBox="0 0 9 11"><rect x="0.5" y="0.5" width="8" height="10" fill="none" stroke="#ddd" stroke-width="0.9"/><circle cx="4.5" cy="3.5" r="1.3" fill="#ddd"/><rect x="2.8" y="5.5" width="3.4" height="4" fill="#ddd"/></svg>
<svg class="a" style="left:956px;top:154px;" width="12" height="11" viewBox="0 0 12 11"><rect x="0.5" y="0.5" width="11" height="10" fill="none" stroke="#ddd" stroke-width="0.9"/><circle cx="6" cy="3.6" r="1.4" fill="#ddd"/><rect x="3.5" y="5.6" width="5" height="4" fill="#ddd"/></svg>
<div class="t" style="left:939px;top:175.75px;font-size:8.5px;line-height:8.5px;color:#d2d2d2;transform:scaleX(0.73);">Resolution: 250 pixels/inch</div>
<div class="t" style="left:918px;top:193.25px;font-size:8.5px;line-height:8.5px;color:#cdcdcd;transform:scaleX(0.72);">Mode</div>
<div class="a" style="left:939px;top:192.5px;width:82px;height:12.5px;background:#3f3f3f;border-radius:1px"></div>
<div class="t" style="left:943px;top:194.50px;font-size:8.5px;line-height:8.5px;color:#dcdcdc;transform:scaleX(0.68);">RGB Color</div>
<svg class="a" style="left:1012px;top:197.25px;" width="6" height="4" viewBox="0 0 6 4"><path d="M0.5 0.5 L3 3 L5.5 0.5" stroke="#a8a8a8" fill="none" stroke-width="1"/></svg>
<div class="a" style="left:939px;top:209.5px;width:82px;height:13.5px;background:#3f3f3f;border-radius:1px"></div>
<div class="t" style="left:943px;top:212.00px;font-size:8.5px;line-height:8.5px;color:#dcdcdc;transform:scaleX(0.75);">16 Bits/Channel</div>
<svg class="a" style="left:1012px;top:214.75px;" width="6" height="4" viewBox="0 0 6 4"><path d="M0.5 0.5 L3 3 L5.5 0.5" stroke="#a8a8a8" fill="none" stroke-width="1"/></svg>
<div class="t" style="left:924px;top:230.75px;font-size:8.5px;line-height:8.5px;color:#cdcdcd;transform:scaleX(0.84);">Fill</div>
<div class="a" style="left:938px;top:229px;width:12px;height:12px;background:#474747;border:1px solid #5e5e5e"></div>
<div class="a" style="left:953px;top:229px;width:68px;height:12.5px;background:#3f3f3f;border-radius:1px"></div>
<div class="t" style="left:957px;top:231.00px;font-size:8.5px;line-height:8.5px;color:#dcdcdc;transform:scaleX(0.77);">Transparent</div>
<svg class="a" style="left:1012px;top:233.75px;" width="6" height="4" viewBox="0 0 6 4"><path d="M0.5 0.5 L3 3 L5.5 0.5" stroke="#a8a8a8" fill="none" stroke-width="1"/></svg>
<div class="a" style="left:896px;top:247px;width:170px;height:1.5px;background:#474747"></div>
<svg class="a" style="left:899px;top:256px;" width="7" height="5" viewBox="0 0 7 5"><path d="M0.5 0.5 L3.5 3.5 L6.5 0.5" stroke="#9a9a9a" fill="none" stroke-width="1"/></svg>
<div class="t" style="left:911px;top:253.20px;font-size:9px;line-height:9px;color:#f0f0f0;transform:scaleX(0.72);font-weight:bold;">Rulers &amp; Grids</div>
<div class="a" style="left:903px;top:271px;width:14px;height:15px;background:#393939"></div>
<svg class="a" style="left:905px;top:273px;" width="10" height="11" viewBox="0 0 10 11"><rect x="0" y="0" width="10" height="2.5" fill="#e4e4e4"/><rect x="0" y="0" width="2.5" height="11" fill="#e4e4e4"/></svg>
<svg class="a" style="left:925px;top:272px;" width="12" height="13" viewBox="0 0 12 13"><g fill="none" stroke="#d8d8d8" stroke-width="0.9"><rect x="0.5" y="0.5" width="11" height="12"/><path d="M4 0.5 V12.5 M8 0.5 V12.5 M0.5 4.5 H11.5 M0.5 8.5 H11.5"/></g></svg>
<svg class="a" style="left:946px;top:272px;" width="12" height="13" viewBox="0 0 12 13"><rect x="0.5" y="0.5" width="11" height="12" fill="none" stroke="#d0d0d0" stroke-width="0.9"/><g fill="#aaa"><circle cx="4" cy="4" r="0.9"/><circle cx="8" cy="4" r="0.9"/><circle cx="4" cy="8" r="0.9"/><circle cx="8" cy="8" r="0.9"/></g></svg>
<div class="a" style="left:975px;top:272px;width:46px;height:13px;background:#3f3f3f;border-radius:1px"></div>
<div class="t" style="left:979px;top:274.25px;font-size:8.5px;line-height:8.5px;color:#dcdcdc;transform:scaleX(0.85);">Pixels</div>
<svg class="a" style="left:1012px;top:277.0px;" width="6" height="4" viewBox="0 0 6 4"><path d="M0.5 0.5 L3 3 L5.5 0.5" stroke="#a8a8a8" fill="none" stroke-width="1"/></svg>
<div class="a" style="left:896px;top:294px;width:170px;height:1.5px;background:#474747"></div>
<svg class="a" style="left:899px;top:303px;" width="7" height="5" viewBox="0 0 7 5"><path d="M0.5 0.5 L3.5 3.5 L6.5 0.5" stroke="#9a9a9a" fill="none" stroke-width="1"/></svg>
<div class="t" style="left:911px;top:300.50px;font-size:9px;line-height:9px;color:#f0f0f0;transform:scaleX(0.7);font-weight:bold;">Guides</div>
<div class="a" style="left:903px;top:317px;width:14px;height:15.5px;background:#393939"></div>
<svg class="a" style="left:905px;top:319px;" width="10" height="11" viewBox="0 0 10 11"><g fill="#e0e0e0"><rect x="2" y="0" width="1" height="11"/><rect x="5" y="0" width="1" height="11"/><rect x="0" y="4" width="10" height="1"/><rect x="0" y="7" width="10" height="1"/></g></svg>
<svg class="a" style="left:925px;top:318px;" width="13" height="13" viewBox="0 0 13 13"><g fill="#d0d0d0"><rect x="2" y="0" width="1" height="11"/><rect x="5" y="0" width="1" height="11"/><rect x="0" y="4" width="8" height="1"/><rect x="0" y="7" width="8" height="1"/><rect x="7" y="8" width="5" height="4"/></g></svg>
<div class="a" style="left:944px;top:317px;width:15px;height:15.5px;background:#393939"></div>
<svg class="a" style="left:946px;top:319px;" width="12" height="12" viewBox="0 0 12 12"><g fill="#e0e0e0"><rect x="1" y="0" width="1" height="11"/><path d="M3 3 L6 1 V5Z"/><rect x="4" y="3" width="6" height="1"/><rect x="7" y="5" width="3" height="5"/></g></svg>
<div class="a" style="left:975px;top:318px;width:46px;height:14px;background:#3f3f3f;border-radius:1px"></div>
<svg class="a" style="left:1012px;top:323.5px;" width="6" height="4" viewBox="0 0 6 4"><path d="M0.5 0.5 L3 3 L5.5 0.5" stroke="#a8a8a8" fill="none" stroke-width="1"/></svg>
<div class="a" style="left:980px;top:324.3px;width:30px;height:1.6px;background:#e8e8e8"></div>
<div class="a" style="left:896px;top:341px;width:170px;height:1.5px;background:#474747"></div>
<svg class="a" style="left:899px;top:350px;" width="7" height="5" viewBox="0 0 7 5"><path d="M0.5 0.5 L3.5 3.5 L6.5 0.5" stroke="#9a9a9a" fill="none" stroke-width="1"/></svg>
<div class="t" style="left:911px;top:348.00px;font-size:9px;line-height:9px;color:#f0f0f0;transform:scaleX(0.71);font-weight:bold;">Quick Actions</div>
<div class="a" style="left:896px;top:384px;width:180px;height:3px;background:#3c3c3c"></div>
<div class="a" style="left:896px;top:387px;width:180px;height:20px;background:#454545"></div>
<div class="a" style="left:896px;top:387px;width:30px;height:20px;background:#535353"></div>
<div class="t" style="left:901px;top:392.50px;font-size:9px;line-height:9px;color:#f0f0f0;transform:scaleX(0.67);font-weight:bold;">Layers</div>
<div class="a" style="left:1064px;top:393.8px;width:8px;height:1.2px;background:#c0c0c0"></div>
<div class="a" style="left:1064px;top:396.8px;width:8px;height:1.2px;background:#c0c0c0"></div>
<div class="a" style="left:1064px;top:399.8px;width:8px;height:1.2px;background:#c0c0c0"></div>
<div class="a" style="left:896px;top:407px;width:180px;height:21px;background:#535353"></div>
<div class="a" style="left:899.5px;top:413px;width:52px;height:12.5px;background:#3d3d3d"></div>
<svg class="a" style="left:903px;top:415px;" width="8" height="9" viewBox="0 0 8 9"><circle cx="3.2" cy="3.4" r="2.4" fill="none" stroke="#e8e8e8" stroke-width="1.2"/><path d="M5 5.3 L7.5 8" stroke="#e8e8e8" stroke-width="1.5"/></svg>
<div class="t" style="left:912px;top:415.25px;font-size:8.5px;line-height:8.5px;color:#e0e0e0;transform:scaleX(0.79);">Kind</div>
<svg class="a" style="left:942px;top:418px;" width="6" height="4" viewBox="0 0 6 4"><path d="M0.5 0.5 L3 3 L5.5 0.5" stroke="#aaa" fill="none" stroke-width="1"/></svg>
<svg class="a" style="left:958px;top:414px;" width="12" height="11" viewBox="0 0 12 11"><rect x="0.5" y="0.5" width="11" height="10" fill="none" stroke="#d8d8d8" stroke-width="1"/><path d="M2 8 L5 4.5 L7 6.5 L8.5 5 L10 8Z" fill="#d8d8d8"/></svg>
<svg class="a" style="left:973px;top:414px;" width="11" height="11" viewBox="0 0 11 11"><circle cx="5.5" cy="5.5" r="4.7" fill="none" stroke="#d8d8d8" stroke-width="1"/><path d="M5.5 0.8 A4.7 4.7 0 0 1 5.5 10.2Z" fill="#d8d8d8"/></svg>
<div class="t" style="left:989.5px;top:414.00px;font-size:11px;line-height:11px;color:#e0e0e0;font-family:'Liberation Serif',serif;">T</div>
<svg class="a" style="left:1003px;top:414px;" width="11" height="11" viewBox="0 0 11 11"><rect x="1.8" y="1.8" width="7.4" height="7.4" fill="none" stroke="#d8d8d8" stroke-width="1"/><g fill="#d8d8d8"><rect x="0" y="0" width="3" height="3"/><rect x="8" y="0" width="3" height="3"/><rect x="0" y="8" width="3" height="3"/><rect x="8" y="8" width="3" height="3"/></g></svg>
<svg class="a" style="left:1019px;top:414px;" width="10" height="12" viewBox="0 0 10 12"><path d="M1 0.5 H6 L9 3.5 V11.5 H1Z" fill="none" stroke="#d8d8d8" stroke-width="1"/><rect x="0" y="6" width="5" height="5" fill="#d8d8d8"/></svg>
<svg class="a" style="left:1034px;top:411px;" width="8" height="15" viewBox="0 0 8 15"><circle cx="4" cy="4" r="3.3" fill="#f0f0f0"/><rect x="3" y="7.5" width="2" height="6" fill="#3a3a3a"/></svg>
<div class="a" style="left:896px;top:428px;width:180px;height:1px;background:#474747"></div>
<div class="a" style="left:899px;top:433.5px;width:78px;height:11.5px;background:#4d4d4d"></div>
<div class="t" style="left:903px;top:435.05px;font-size:8.5px;line-height:8.5px;color:#6e6e6e;transform:scaleX(0.76);">Normal</div>
<div class="t" style="left:983px;top:435.05px;font-size:8.5px;line-height:8.5px;color:#6e6e6e;transform:scaleX(0.75);">Opacity:</div>
<div class="a" style="left:1010px;top:433.5px;width:21px;height:11.5px;background:#474747"></div>
<div class="t" style="left:1012px;top:435.30px;font-size:8px;line-height:8px;color:#6a6a6a;transform:scaleX(0.84);">100%</div>
<div class="a" style="left:1031px;top:433.5px;width:9px;height:11.5px;background:#4c4c4c"></div>
<div class="a" style="left:896px;top:447px;width:180px;height:1px;background:#474747"></div>
<div class="t" style="left:899px;top:454.75px;font-size:8.5px;line-height:8.5px;color:#6e6e6e;transform:scaleX(0.66);">Lock:</div>
<svg class="a" style="left:918px;top:453px;" width="11" height="11" viewBox="0 0 11 11"><g fill="#7e7e7e"><rect x="0" y="0" width="3" height="3"/><rect x="4" y="4" width="3" height="3"/><rect x="8" y="0" width="3" height="3"/><rect x="0" y="8" width="3" height="3"/><rect x="8" y="8" width="3" height="3"/></g></svg>
<svg class="a" style="left:932px;top:453px;" width="11" height="12" viewBox="0 0 11 12"><path d="M10 1 L4 7.5 M4.5 7 Q2 8 1.5 11" stroke="#7e7e7e" fill="none" stroke-width="1.5"/></svg>
<svg class="a" style="left:946px;top:453px;" width="11" height="12" viewBox="0 0 11 12"><g fill="none" stroke="#7e7e7e" stroke-width="1"><path d="M5.5 0 V12 M0 6 H11"/></g></svg>
<svg class="a" style="left:960px;top:453px;" width="12" height="11" viewBox="0 0 12 11"><g fill="none" stroke="#7e7e7e" stroke-width="1"><path d="M2 0 V9 H11 M0 2 H8 V5"/></g></svg>
<svg class="a" style="left:974px;top:452px;" width="10" height="12" viewBox="0 0 10 12"><rect x="1" y="5" width="8" height="6.5" fill="#7e7e7e"/><path d="M2.5 5 V3 Q5 0 7.5 3 V5" fill="none" stroke="#7e7e7e" stroke-width="1"/></svg>
<div class="t" style="left:998px;top:454.75px;font-size:8.5px;line-height:8.5px;color:#6e6e6e;transform:scaleX(0.84);">Fill:</div>
<div class="a" style="left:1010px;top:453.5px;width:21px;height:11.5px;background:#474747"></div>
<div class="t" style="left:1012px;top:455.30px;font-size:8px;line-height:8px;color:#6a6a6a;transform:scaleX(0.84);">100%</div>
<div class="a" style="left:1031px;top:453.5px;width:9px;height:11.5px;background:#4c4c4c"></div>
<div class="a" style="left:896px;top:465.5px;width:180px;height:1px;background:#474747"></div>
<div class="a" style="left:896px;top:466.5px;width:170px;height:253.5px;background:#535353"></div>
<div class="a" style="left:914px;top:466.5px;width:1px;height:253.5px;background:#4a4a4a"></div>
<svg class="a" style="left:900.5px;top:475px;" width="10" height="7" viewBox="0 0 10 7"><path d="M0.5 3.5 Q5 -1 9.5 3.5 Q5 8 0.5 3.5Z" fill="none" stroke="#bfbfbf" stroke-width="0.9"/><circle cx="5" cy="3.5" r="1.6" fill="#bfbfbf"/></svg>
<svg class="a" style="left:927px;top:476px;" width="6" height="4" viewBox="0 0 6 4"><path d="M0.5 0.5 L3 3 L5.5 0.5" stroke="#bbb" fill="none" stroke-width="1"/></svg>
<svg class="a" style="left:934px;top:472px;" width="10" height="9" viewBox="0 0 10 9"><path d="M0.5 1 H4 L5 2.5 H9.5 V8.5 H0.5Z" fill="#e8e8e8"/><path d="M0.5 3.5 H9.5" stroke="#535353" stroke-width="0.6"/></svg>
<div class="t" style="left:951px;top:474.25px;font-size:8.5px;line-height:8.5px;color:#e4e4e4;transform:scaleX(0.74);">adite text</div>
<div class="a" style="left:896px;top:486px;width:170px;height:1px;background:#4a4a4a"></div>
<svg class="a" style="left:900.5px;top:498.0px;" width="10" height="7" viewBox="0 0 10 7"><path d="M0.5 3.5 Q5 -1 9.5 3.5 Q5 8 0.5 3.5Z" fill="none" stroke="#bfbfbf" stroke-width="0.9"/><circle cx="5" cy="3.5" r="1.6" fill="#bfbfbf"/></svg>
<div class="t" style="left:942px;top:494.00px;font-size:16px;line-height:16px;color:#e2e2e2;transform:scaleX(0.9);font-family:'Liberation Serif',serif;">T</div>
<div class="t" style="left:962.5px;top:497.75px;font-size:7.5px;line-height:7.5px;color:#e6e6e6;transform:scaleX(0.8);">Layer 2</div>
<div class="a" style="left:896px;top:516px;width:170px;height:1px;background:#4a4a4a"></div>
<svg class="a" style="left:900.5px;top:526.5px;" width="10" height="7" viewBox="0 0 10 7"><path d="M0.5 3.5 Q5 -1 9.5 3.5 Q5 8 0.5 3.5Z" fill="none" stroke="#bfbfbf" stroke-width="0.9"/><circle cx="5" cy="3.5" r="1.6" fill="#bfbfbf"/></svg>
<div class="a" style="left:937.5px;top:519px;width:15.5px;height:21.5px;background-color:#fff;background-image:linear-gradient(45deg,#ddd 25%,transparent 25%,transparent 75%,#ddd 75%),linear-gradient(45deg,#ddd 25%,transparent 25%,transparent 75%,#ddd 75%);background-size:4px 4px;background-position:0 0,2px 2px;border:1px solid #777"></div>
<div class="a" style="left:940px;top:521px;width:3px;height:4px;background:#a03030"></div>
<div class="t" style="left:959px;top:525.75px;font-size:8.5px;line-height:8.5px;color:#e6e6e6;transform:scaleX(0.73);">Layer 3</div>
<div class="a" style="left:896px;top:544px;width:170px;height:1px;background:#4a4a4a"></div>
<svg class="a" style="left:900.5px;top:555.0px;" width="10" height="7" viewBox="0 0 10 7"><path d="M0.5 3.5 Q5 -1 9.5 3.5 Q5 8 0.5 3.5Z" fill="none" stroke="#bfbfbf" stroke-width="0.9"/><circle cx="5" cy="3.5" r="1.6" fill="#bfbfbf"/></svg>
<div class="t" style="left:942px;top:551.00px;font-size:16px;line-height:16px;color:#e2e2e2;transform:scaleX(0.9);font-family:'Liberation Serif',serif;">T</div>
<div class="t" style="left:962.5px;top:554.75px;font-size:7.5px;line-height:7.5px;color:#e6e6e6;transform:scaleX(0.85);">cilla0000000...&lt;&lt;&lt;&lt;&lt;&lt;&lt;&lt;&lt;0 6</div>
<div class="a" style="left:896px;top:572px;width:170px;height:1px;background:#4a4a4a"></div>
<div class="a" style="left:901px;top:582px;width:6px;height:10px;border:1px solid #5c5c5c"></div>
<div class="t" style="left:942px;top:579.50px;font-size:16px;line-height:16px;color:#e2e2e2;transform:scaleX(0.9);font-family:'Liberation Serif',serif;">T</div>
<div class="t" style="left:962.5px;top:583.25px;font-size:7.5px;line-height:7.5px;color:#e6e6e6;transform:scaleX(0.8);">1ss</div>
<div class="a" style="left:896px;top:601px;width:170px;height:1px;background:#4a4a4a"></div>
<svg class="a" style="left:900.5px;top:612.0px;" width="10" height="7" viewBox="0 0 10 7"><path d="M0.5 3.5 Q5 -1 9.5 3.5 Q5 8 0.5 3.5Z" fill="none" stroke="#bfbfbf" stroke-width="0.9"/><circle cx="5" cy="3.5" r="1.6" fill="#bfbfbf"/></svg>
<div class="t" style="left:942px;top:608.00px;font-size:16px;line-height:16px;color:#e2e2e2;transform:scaleX(0.9);font-family:'Liberation Serif',serif;">T</div>
<div class="t" style="left:962.5px;top:611.75px;font-size:7.5px;line-height:7.5px;color:#e6e6e6;transform:scaleX(0.8);">169</div>
<div class="a" style="left:896px;top:630px;width:170px;height:1px;background:#4a4a4a"></div>
<svg class="a" style="left:900.5px;top:640.5px;" width="10" height="7" viewBox="0 0 10 7"><path d="M0.5 3.5 Q5 -1 9.5 3.5 Q5 8 0.5 3.5Z" fill="none" stroke="#bfbfbf" stroke-width="0.9"/><circle cx="5" cy="3.5" r="1.6" fill="#bfbfbf"/></svg>
<div class="t" style="left:942px;top:636.50px;font-size:16px;line-height:16px;color:#e2e2e2;transform:scaleX(0.9);font-family:'Liberation Serif',serif;">T</div>
<div class="t" style="left:962.5px;top:640.25px;font-size:7.5px;line-height:7.5px;color:#e6e6e6;transform:scaleX(0.8);">m</div>
<div class="a" style="left:896px;top:658px;width:170px;height:1px;background:#4a4a4a"></div>
<svg class="a" style="left:900.5px;top:669.0px;" width="10" height="7" viewBox="0 0 10 7"><path d="M0.5 3.5 Q5 -1 9.5 3.5 Q5 8 0.5 3.5Z" fill="none" stroke="#bfbfbf" stroke-width="0.9"/><circle cx="5" cy="3.5" r="1.6" fill="#bfbfbf"/></svg>
<div class="t" style="left:942px;top:665.00px;font-size:16px;line-height:16px;color:#e2e2e2;transform:scaleX(0.9);font-family:'Liberation Serif',serif;">T</div>
<div class="t" style="left:962.5px;top:668.75px;font-size:7.5px;line-height:7.5px;color:#e6e6e6;transform:scaleX(0.8);">129 6</div>
<div class="a" style="left:896px;top:686px;width:170px;height:1px;background:#4a4a4a"></div>
<svg class="a" style="left:900.5px;top:697.5px;" width="10" height="7" viewBox="0 0 10 7"><path d="M0.5 3.5 Q5 -1 9.5 3.5 Q5 8 0.5 3.5Z" fill="none" stroke="#bfbfbf" stroke-width="0.9"/><circle cx="5" cy="3.5" r="1.6" fill="#bfbfbf"/></svg>
<div class="t" style="left:942px;top:693.50px;font-size:16px;line-height:16px;color:#e2e2e2;transform:scaleX(0.9);font-family:'Liberation Serif',serif;">T</div>
<div class="t" style="left:962.5px;top:697.25px;font-size:7.5px;line-height:7.5px;color:#e6e6e6;transform:scaleX(0.8);">01.01.1990</div>
<div class="a" style="left:896px;top:715px;width:170px;height:1px;background:#4a4a4a"></div>
<div class="a" style="left:1066px;top:467px;width:9px;height:253px;background:#4b4b4b"></div>
<div class="a" style="left:1067px;top:488px;width:7px;height:68px;background:#5e5e5e"></div>
<svg class="a" style="left:1067px;top:473px;" width="7" height="5" viewBox="0 0 7 5"><path d="M0.8 4 L3.5 1.2 L6.2 4" stroke="#8a8a8a" fill="none" stroke-width="1"/></svg>
<div class="a" style="left:896px;top:706px;width:180px;height:14px;background:#535353"></div>
<svg class="a" style="left:947px;top:709px;" width="11" height="8" viewBox="0 0 11 8"><g fill="none" stroke="#8a8a8a" stroke-width="1.1"><rect x="0.5" y="1.5" width="5" height="5" rx="2.5"/><rect x="5" y="1.5" width="5" height="5" rx="2.5"/></g></svg>
<div class="t" style="left:964px;top:709.25px;font-size:8.5px;line-height:8.5px;color:#8a8a8a;font-family:'Liberation Serif',serif;font-style:italic">fx</div>
<svg class="a" style="left:980px;top:708px;" width="11" height="10" viewBox="0 0 11 10"><rect x="0.5" y="0.5" width="10" height="9" fill="none" stroke="#cfcfcf" stroke-width="1"/><circle cx="5.5" cy="5" r="2.5" fill="#cfcfcf"/></svg>
<svg class="a" style="left:997px;top:708px;" width="10" height="11" viewBox="0 0 10 11"><circle cx="5" cy="5" r="4.3" fill="none" stroke="#cfcfcf" stroke-width="1"/><path d="M5 0.7 A4.3 4.3 0 0 0 5 9.3Z" fill="#cfcfcf"/></svg>
<svg class="a" style="left:1014px;top:708px;" width="12" height="10" viewBox="0 0 12 10"><path d="M0.5 1 H4.5 L5.5 2.5 H11.5 V9.5 H0.5Z" fill="#cfcfcf"/></svg>
<svg class="a" style="left:1032px;top:707px;" width="10" height="12" viewBox="0 0 10 12"><rect x="0.5" y="0.5" width="9" height="11" fill="none" stroke="#cfcfcf" stroke-width="1"/><path d="M5 3 V9 M2 6 H8" stroke="#cfcfcf"/></svg>
<svg class="a" style="left:1049px;top:707px;" width="9" height="12" viewBox="0 0 9 12"><g fill="none" stroke="#8a8a8a" stroke-width="1"><path d="M0 2.5 H9 M3 2.5 V0.8 H6 V2.5 M1.5 2.5 L2 11.5 H7 L7.5 2.5"/></g></svg>
<svg class="a" style="left:0;top:0" width="1080" height="720" viewBox="0 0 1080 720"><g fill="none" stroke="#1c1c1c" stroke-width="2.5" stroke-linejoin="miter">
<path d="M873 666.5 H859 V697 H873 M859 681.5 H871.5"/>
<path d="M877.8 665.5 V698 M894.5 666 L878.5 684.5 M884 678 L895 698"/>
<ellipse cx="906.9" cy="681.8" rx="9.8" ry="14.9"/>
<path d="M941.8 671 A8.9 14.9 0 1 0 942.2 690 V682 H935.5"/>
<path d="M963 666.5 H950 V697 H963 M950 681.5 H962"/>
<path d="M967.6 698 L976.7 666 L985.8 698 M970.6 686 H982.8"/>
</g>
<rect x="991.6" y="693.6" width="3.4" height="4" fill="#1c1c1c"/>
<g fill="none" stroke="rgba(95,85,170,0.22)" stroke-width="5.5">
<ellipse cx="1010.6" cy="681.5" rx="11.1" ry="15.3"/>
<path d="M1029.3 698 V666.6 H1036.5 Q1043.8 666.6 1043.8 674 Q1043.8 681.5 1036.5 681.5 H1029.3 M1036.5 681.5 L1045.2 698"/>
<path d="M1066.6 671 A9.5 15.2 0 1 0 1067.2 690 V682 H1057.5"/>
</g>
<g fill="none" stroke="#86ad22" stroke-width="2.6">
<ellipse cx="1010.6" cy="681.5" rx="11.1" ry="15.3"/>
<path d="M1029.3 698 V666.6 H1036.5 Q1043.8 666.6 1043.8 674 Q1043.8 681.5 1036.5 681.5 H1029.3 M1036.5 681.5 L1045.2 698"/>
<path d="M1066.6 671 A9.5 15.2 0 1 0 1067.2 690 V682 H1057.5"/>
</g></svg>
</div>
</body></html>
